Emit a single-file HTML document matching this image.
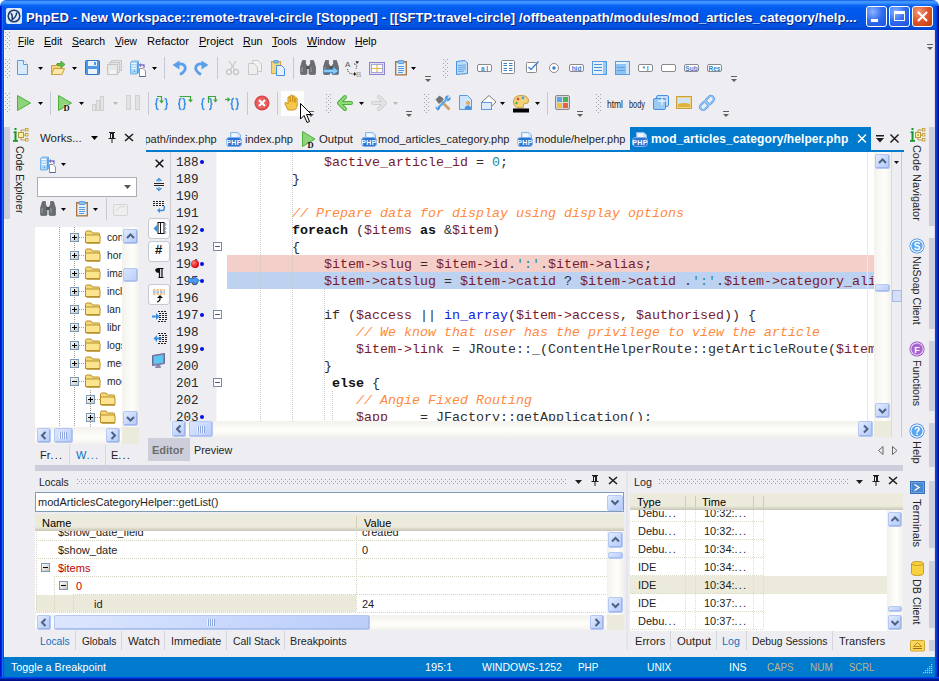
<!DOCTYPE html><html><head><meta charset="utf-8"><style>
*{margin:0;padding:0;box-sizing:border-box}
html,body{width:939px;height:681px;overflow:hidden;background:#fff}
body{position:relative;font-family:"Liberation Sans",sans-serif;font-size:11px;color:#000}
body div{position:absolute}
.t{white-space:nowrap;line-height:14px;height:14px}
.m{font-family:"Liberation Mono",monospace;font-size:13.33px;line-height:17px;white-space:pre}
svg{position:absolute;overflow:visible}
</style></head><body>
<div style="left:0px;top:0px;width:939px;height:30px;background:linear-gradient(#0A3FD8 0,#3D95FF 1px,#3D95FF 3px,#1169F5 5px,#005CEF 8px,#0058EB 15px,#0055E5 24px,#004BD8 28px,#0042CC 30px);border-radius:6px 6px 0 0"></div>
<div style="left:0px;top:6px;width:4px;height:675px;background:linear-gradient(90deg,#0010D0 0,#0010D0 1px,#0A28D8 1px,#0A28D8 2px,#186CF2 2px,#186CF2 3px,#0052E2 3px)"></div>
<div style="left:935px;top:6px;width:4px;height:675px;background:linear-gradient(90deg,#0046F0 0,#0046F0 1px,#003EE0 1px,#003EE0 2px,#0026B0 2px,#0026B0 3px,#00108A 3px)"></div>
<div style="left:0px;top:677px;width:939px;height:4px;background:linear-gradient(#0046F0 0,#0046F0 1px,#0030C8 1px,#0030C8 2px,#001890 2px,#001890 3px,#00108A 3px)"></div>
<div style="left:6px;top:8px;width:16px;height:16px;background:#DDE8F8;border-radius:2px"></div>
<svg style="left:6px;top:8px" width="16" height="16"><circle cx="8" cy="8" r="5.8" fill="none" stroke="#1A3A6A" stroke-width="1.5"/><path d="M4.5 5.5 Q6.5 5 6.2 11.5 Q10 9.5 10.8 4.5" fill="none" stroke="#1A3A6A" stroke-width="1.5"/></svg>
<div class="t" style="left:26px;top:10px;font-weight:bold;font-size:13px;color:#fff;text-shadow:1px 1px 0 #0A1E80;letter-spacing:0.09px;line-height:16px;height:16px">PhpED - New Workspace::remote-travel-circle [Stopped] - [[SFTP:travel-circle] /offbeatenpath/modules/mod_articles_category/help...</div>
<div style="left:866px;top:6px;width:21px;height:21px;border:1px solid #fff;border-radius:3px;background:radial-gradient(circle at 30% 25%,#8AB4FF,#2F6CF0 50%,#1D4FD8)"></div>
<div style="left:871px;top:19px;width:7px;height:3px;background:#fff"></div>
<div style="left:889px;top:6px;width:21px;height:21px;border:1px solid #fff;border-radius:3px;background:radial-gradient(circle at 30% 25%,#8AB4FF,#2F6CF0 50%,#1D4FD8)"></div>
<div style="left:894px;top:11px;width:11px;height:10px;border:1px solid #fff;border-top-width:3px"></div>
<div style="left:912px;top:6px;width:21px;height:21px;border:1px solid #fff;border-radius:3px;background:radial-gradient(circle at 30% 25%,#F09A7E,#E0582C 45%,#C53A10)"></div>
<svg style="left:912px;top:6px" width="21" height="21"><path d="M6 6 L15 15 M15 6 L6 15" stroke="#fff" stroke-width="2.2"/></svg>
<div style="left:4px;top:30px;width:931px;height:627px;background:#EEEEF2"></div>
<div style="left:4px;top:30px;width:1px;height:627px;background:#FBF8F5"></div>
<div style="left:4px;top:30px;width:931px;height:1px;background:#F8F6F4"></div>
<div style="left:934px;top:30px;width:1px;height:627px;background:#DCDCE2"></div>
<div style="left:4px;top:657px;width:931px;height:20px;background:#007ACC"></div>
<div class="t" style="left:11px;top:660px;color:#fff;transform-origin:0 0;transform:scaleX(0.9760)">Toggle a Breakpoint</div>
<div class="t" style="left:425px;top:660px;color:#fff;transform-origin:0 0;transform:scaleX(0.9976)">195:1</div>
<div class="t" style="left:482px;top:660px;color:#fff;transform-origin:0 0;transform:scaleX(0.9547)">WINDOWS-1252</div>
<div class="t" style="left:578px;top:660px;color:#fff;transform-origin:0 0;transform:scaleX(0.9017)">PHP</div>
<div class="t" style="left:647px;top:660px;color:#fff;transform-origin:0 0;transform:scaleX(0.9295)">UNIX</div>
<div class="t" style="left:729px;top:660px;color:#fff;transform-origin:0 0;transform:scaleX(0.9629)">INS</div>
<div class="t" style="left:767px;top:660px;color:#BDB48C;transform-origin:0 0;transform:scaleX(0.8872)">CAPS</div>
<div class="t" style="left:810px;top:660px;color:#BDB48C;transform-origin:0 0;transform:scaleX(0.9072)">NUM</div>
<div class="t" style="left:849px;top:660px;color:#BDB48C;transform-origin:0 0;transform:scaleX(0.8644)">SCRL</div>
<svg style="left:5px;top:32px" width="6" height="17"><g fill="#A0A0AC"><rect x="0" y="0" width="1" height="1"/><rect x="4" y="0" width="1" height="1"/><rect x="2" y="2" width="1" height="1"/><rect x="0" y="4" width="1" height="1"/><rect x="4" y="4" width="1" height="1"/><rect x="2" y="6" width="1" height="1"/><rect x="0" y="8" width="1" height="1"/><rect x="4" y="8" width="1" height="1"/><rect x="2" y="10" width="1" height="1"/><rect x="0" y="12" width="1" height="1"/><rect x="4" y="12" width="1" height="1"/><rect x="2" y="14" width="1" height="1"/><rect x="0" y="16" width="1" height="1"/><rect x="4" y="16" width="1" height="1"/></g></svg>
<div class="t" style="left:18px;top:34px;;transform-origin:0 0;transform:scaleX(0.9151)"><u>F</u>ile</div>
<div class="t" style="left:44px;top:34px;;transform-origin:0 0;transform:scaleX(0.9628)"><u>E</u>dit</div>
<div class="t" style="left:72px;top:34px;;transform-origin:0 0;transform:scaleX(0.9506)"><u>S</u>earch</div>
<div class="t" style="left:115px;top:34px;;transform-origin:0 0;transform:scaleX(0.9275)"><u>V</u>iew</div>
<div class="t" style="left:147px;top:34px;;transform-origin:0 0;transform:scaleX(1.0075)">Refactor</div>
<div class="t" style="left:199px;top:34px;;transform-origin:0 0;transform:scaleX(1.0015)"><u>P</u>roject</div>
<div class="t" style="left:243px;top:34px;;transform-origin:0 0;transform:scaleX(0.9642)"><u>R</u>un</div>
<div class="t" style="left:272px;top:34px;;transform-origin:0 0;transform:scaleX(0.9722)"><u>T</u>ools</div>
<div class="t" style="left:307px;top:34px;;transform-origin:0 0;transform:scaleX(0.9757)"><u>W</u>indow</div>
<div class="t" style="left:355px;top:34px;;transform-origin:0 0;transform:scaleX(0.9480)"><u>H</u>elp</div>
<svg style="left:927px;top:44px" width="7" height="7"><rect x="0" y="0" width="6" height="1" fill="#606060"/><path d="M0 3 H6 L3 6 Z" fill="#606060"/></svg>
<svg style="left:5px;top:59px" width="6" height="19"><g fill="#A0A0AC"><rect x="0" y="0" width="1" height="1"/><rect x="4" y="0" width="1" height="1"/><rect x="2" y="2" width="1" height="1"/><rect x="0" y="4" width="1" height="1"/><rect x="4" y="4" width="1" height="1"/><rect x="2" y="6" width="1" height="1"/><rect x="0" y="8" width="1" height="1"/><rect x="4" y="8" width="1" height="1"/><rect x="2" y="10" width="1" height="1"/><rect x="0" y="12" width="1" height="1"/><rect x="4" y="12" width="1" height="1"/><rect x="2" y="14" width="1" height="1"/><rect x="0" y="16" width="1" height="1"/><rect x="4" y="16" width="1" height="1"/><rect x="2" y="18" width="1" height="1"/></g></svg>
<svg style="left:15px;top:60px" width="16" height="16" viewBox="0 0 16 16"><path d="M2.5 0.5 H8.5 L12.5 4.5 V14.5 H2.5 Z" fill="#D8EAFB" stroke="#5A9BE0"/><path d="M8.5 0.5 V4.5 H12.5" fill="#fff" stroke="#5A9BE0"/></svg>
<svg style="left:38px;top:67px" width="6" height="3"><path d="M0 0 H5 L2.5 3 Z" fill="#000"/></svg>
<svg style="left:50px;top:60px" width="16" height="16" viewBox="0 0 16 16"><path d="M1.5 5.5 H6 L7 4 H11.5 V14.5 H1.5 Z" fill="#F3D27A" stroke="#C9A040"/><path d="M1.5 14.5 L4 8.5 H14.5 L12 14.5 Z" fill="#FBE7A6" stroke="#C9A040"/><path d="M7 3.5 H11 V1 L15 4.5 L11 8 V5.5 H7 Z" fill="#5DBE4A" stroke="#3C9A2E" stroke-width="0.8"/></svg>
<svg style="left:72px;top:67px" width="6" height="3"><path d="M0 0 H5 L2.5 3 Z" fill="#000"/></svg>
<svg style="left:85px;top:60px" width="16" height="16" viewBox="0 0 16 16"><rect x="0.5" y="0.5" width="14" height="14" rx="1" fill="#4D97E8" stroke="#2F73C8"/><rect x="3" y="1" width="9" height="5" fill="#EAF3FC"/><rect x="9" y="2" width="2" height="3" fill="#4D97E8"/><rect x="3" y="9" width="9" height="5" fill="#EAF3FC"/></svg>
<svg style="left:107px;top:60px" width="16" height="16" viewBox="0 0 16 16"><rect x="4.5" y="0.5" width="10" height="10" fill="#E0E0E0" stroke="#C8C8C8"/><rect x="2.5" y="2.5" width="10" height="10" fill="#E4E4E4" stroke="#C8C8C8"/><rect x="0.5" y="4.5" width="10" height="10" fill="#E8E8E8" stroke="#C4C4C4"/><rect x="2.5" y="10" width="6" height="4" fill="#F4F4F4"/></svg>
<svg style="left:130px;top:60px" width="17" height="17" viewBox="0 0 17 17"><path d="M0.5 2.5 L2 1 H8.5 V12.5 L7 14 H0.5 Z" fill="#A8D4F6" stroke="#5AA8EC" stroke-width="0.8"/><path d="M7 2.5 L8.5 1 V12.5 L7 14 Z" fill="#5AA0E0"/><path d="M1.5 3.5 H6.5 M1.5 6 H6.5 M1.5 8.5 H6.5" stroke="#fff" stroke-width="1.2"/><rect x="4" y="11" width="1" height="1" fill="#3A88D8"/><path d="M9.5 8.5 H13 L15.5 11 V16.5 H9.5 Z" fill="#fff" stroke="#888" stroke-width="0.9"/><path d="M9.5 16.5 H15.5" stroke="#4A6A98"/><path d="M14 8 V5 H10" fill="none" stroke="#7A70C8" stroke-width="1.3"/><path d="M11 3 L8.5 5 L11 7 Z" fill="#7A70C8"/></svg>
<svg style="left:152px;top:67px" width="6" height="3"><path d="M0 0 H5 L2.5 3 Z" fill="#000"/></svg>
<div style="left:164px;top:57px;width:1px;height:22px;background:#C5C7D4"></div>
<svg style="left:172px;top:60px" width="16" height="16" viewBox="0 0 16 16"><path d="M5 4.5 Q11 2.5 13 6.5 Q14.5 11 8 14.5" fill="none" stroke="#5AA0E8" stroke-width="2.8"/><path d="M0.5 5 L7.5 0.5 L7.5 9.5 Z" fill="#5AA0E8"/></svg>
<svg style="left:194px;top:60px" width="16" height="16" viewBox="0 0 16 16"><g transform="translate(15,0) scale(-1,1)"><path d="M5 4.5 Q11 2.5 13 6.5 Q14.5 11 8 14.5" fill="none" stroke="#5AA0E8" stroke-width="2.8"/><path d="M0.5 5 L7.5 0.5 L7.5 9.5 Z" fill="#5AA0E8"/></g></svg>
<div style="left:217px;top:57px;width:1px;height:22px;background:#C5C7D4"></div>
<svg style="left:225px;top:60px" width="16" height="16" viewBox="0 0 16 16"><path d="M4 1 L10 10 M11 1 L5 10" stroke="#C8C8C8" stroke-width="1.3"/><circle cx="4" cy="12" r="2.5" fill="none" stroke="#C0C0C0" stroke-width="1.2"/><circle cx="11" cy="12" r="2.5" fill="none" stroke="#C0C0C0" stroke-width="1.2"/></svg>
<svg style="left:248px;top:60px" width="16" height="16" viewBox="0 0 16 16"><path d="M4.5 0.5 H10 L13.5 4 V11.5 H4.5 Z" fill="#F2F2F2" stroke="#C8C8C8"/><path d="M0.5 3.5 H6 L9.5 7 V14.5 H0.5 Z" fill="#EEEEEE" stroke="#C8C8C8"/></svg>
<svg style="left:271px;top:60px" width="16" height="16" viewBox="0 0 16 16"><rect x="0.5" y="1.5" width="9" height="12" fill="#F2D77A" stroke="#D0A840"/><rect x="2.5" y="0.5" width="5" height="2.5" rx="1" fill="#7FB8EE" stroke="#4A90D8" stroke-width="0.8"/><path d="M5.5 5.5 H10.5 L13.5 8.5 V15.5 H5.5 Z" fill="#E4F0FC" stroke="#4A90E0"/></svg>
<div style="left:293px;top:57px;width:1px;height:22px;background:#C5C7D4"></div>
<svg style="left:300px;top:60px" width="16" height="16" viewBox="0 0 16 16"><path d="M2.5 0.5 H5.5 V3.5 L7 6 V13.5 Q7 14.5 5.5 14.5 H1.5 Q0.5 14.5 0.5 13.5 V7 Z" fill="#6A6E72" stroke="#505458" stroke-width="0.6"/><path d="M13.5 0.5 H10.5 V3.5 L9 6 V13.5 Q9 14.5 10.5 14.5 H14.5 Q15.5 14.5 15.5 13.5 V7 Z" fill="#6A6E72" stroke="#505458" stroke-width="0.6"/><rect x="6.5" y="6" width="3" height="3" fill="#505458"/><path d="M2 7 V12 M11 7 V12" stroke="#9A9EA2" stroke-width="1"/></svg>
<svg style="left:323px;top:60px" width="16" height="16" viewBox="0 0 16 16"><path d="M2.5 0.5 H5.5 V3.5 L7 6 V13.5 Q7 14.5 5.5 14.5 H1.5 Q0.5 14.5 0.5 13.5 V7 Z" fill="#6A6E72" stroke="#505458" stroke-width="0.6"/><path d="M13.5 0.5 H10.5 V3.5 L9 6 V13.5 Q9 14.5 10.5 14.5 H14.5 Q15.5 14.5 15.5 13.5 V7 Z" fill="#6A6E72" stroke="#505458" stroke-width="0.6"/><rect x="6.5" y="6" width="3" height="3" fill="#505458"/><path d="M2 7 V12 M11 7 V12" stroke="#9A9EA2" stroke-width="1"/><path d="M0.5 9.5 H10 V7 L15.5 11 L10 15 V12.5 H0.5 Z" fill="#8ACAF4" stroke="#3A88D8" stroke-width="0.7"/></svg>
<svg style="left:345px;top:60px" width="18" height="17" viewBox="0 0 18 17"><text x="0" y="7" font-size="8" font-family="Liberation Sans" fill="#555">A</text><text x="11" y="16.5" font-size="8" font-family="Liberation Sans" fill="#999">B</text><path d="M2.5 9 Q3 14.5 9.5 14" fill="none" stroke="#222" stroke-dasharray="1,1"/><path d="M9 4 Q13 4 11 9" fill="none" stroke="#222" stroke-dasharray="1,1"/><path d="M9 12 L11.5 14 L9 16 Z" fill="#222"/><path d="M10.5 1 L14 1.5 L12 4 Z" fill="#222"/></svg>
<svg style="left:369px;top:61px" width="16" height="16" viewBox="0 0 16 16"><rect x="0.5" y="1.5" width="15" height="12" fill="#E0DDF4" stroke="#8C86C8"/><rect x="2.5" y="3.5" width="11" height="8" fill="#fff" stroke="#A8A4D8"/><path d="M8 4 V11 M3 7.5 H13" stroke="#E8B848" stroke-width="1.2"/></svg>
<svg style="left:395px;top:60px" width="16" height="16" viewBox="0 0 16 16"><rect x="0.5" y="1.5" width="11" height="13.5" fill="#C89868" stroke="#A87848"/><rect x="1.5" y="3" width="9" height="11" fill="#E4F0FC"/><rect x="3" y="0.5" width="6" height="3" rx="1" fill="#8CC0F0" stroke="#4A90D8" stroke-width="0.8"/><path d="M3 6.5 H9 M3 8.5 H9 M3 10.5 H9 M3 12.5 H8" stroke="#5A9AE0"/></svg>
<svg style="left:411px;top:67px" width="6" height="3"><path d="M0 0 H5 L2.5 3 Z" fill="#000"/></svg>
<svg style="left:425px;top:76px" width="7" height="7"><rect x="0" y="0" width="6" height="1" fill="#606060"/><path d="M0 3 H6 L3 6 Z" fill="#606060"/></svg>
<svg style="left:443px;top:59px" width="6" height="19"><g fill="#A0A0AC"><rect x="0" y="0" width="1" height="1"/><rect x="4" y="0" width="1" height="1"/><rect x="2" y="2" width="1" height="1"/><rect x="0" y="4" width="1" height="1"/><rect x="4" y="4" width="1" height="1"/><rect x="2" y="6" width="1" height="1"/><rect x="0" y="8" width="1" height="1"/><rect x="4" y="8" width="1" height="1"/><rect x="2" y="10" width="1" height="1"/><rect x="0" y="12" width="1" height="1"/><rect x="4" y="12" width="1" height="1"/><rect x="2" y="14" width="1" height="1"/><rect x="0" y="16" width="1" height="1"/><rect x="4" y="16" width="1" height="1"/><rect x="2" y="18" width="1" height="1"/></g></svg>
<svg style="left:456px;top:60px" width="16" height="16" viewBox="0 0 16 16"><path d="M0.5 1.5 L9 0.5 L11.5 3 V13.5 L0.5 14.5 Z" fill="#BCDCF8" stroke="#4A90E0"/><path d="M2 5.5 L10 5 M2 7.5 L10 7 M2 9.5 L10 9 M2 11.5 L8 11.2" stroke="#5A9CE4" stroke-width="0.9"/></svg>
<svg style="left:477px;top:64px" width="16" height="9" viewBox="0 0 16 9"><rect x="0.5" y="0.5" width="14" height="7" rx="1.5" fill="#fff" stroke="#8A8A8A"/><text x="7.5" y="6.5" font-size="6.5" text-anchor="middle" font-family="Liberation Sans" font-weight="bold" fill="#3A7FD0">a I</text></svg>
<svg style="left:501px;top:60px" width="16" height="16" viewBox="0 0 16 16"><rect x="0.5" y="0.5" width="13" height="13" rx="1" fill="#fff" stroke="#8A8A8A"/><path d="M2.5 3.5 H6 M2.5 5.5 H6 M8 3.5 H11.5 M8 5.5 H11.5 M2.5 8.5 H6 M2.5 10.5 H6 M8 8.5 H11.5 M8 10.5 H11.5" stroke="#3A7FD0"/></svg>
<svg style="left:526px;top:60px" width="16" height="16" viewBox="0 0 16 16"><rect x="0.5" y="2.5" width="10" height="10" rx="1" fill="#fff" stroke="#8A8A8A"/><path d="M2.5 7 L5 9.5 L12.5 1.5" fill="none" stroke="#3A7FD0" stroke-width="1.3"/></svg>
<svg style="left:549px;top:63px" width="16" height="16" viewBox="0 0 16 16"><circle cx="5" cy="5" r="4.5" fill="#fff" stroke="#8A8A8A"/><circle cx="5" cy="5" r="1.8" fill="#3A7FD0"/></svg>
<svg style="left:569px;top:64px" width="16" height="9" viewBox="0 0 16 9"><rect x="0.5" y="0.5" width="14" height="7" rx="1.5" fill="#fff" stroke="#8A8A8A"/><text x="7.5" y="6.5" font-size="6.5" text-anchor="middle" font-family="Liberation Sans" font-weight="bold" fill="#3A7FD0">hid</text></svg>
<svg style="left:592px;top:61px" width="16" height="16" viewBox="0 0 16 16"><rect x="0.5" y="0.5" width="14" height="13" fill="#E6F1FC" stroke="#5A9BE0"/><rect x="11" y="1" width="3" height="12" fill="#9CC8F0"/><path d="M2 3.5 H10 M2 6.5 H10 M2 9.5 H10" stroke="#4A90E0"/></svg>
<svg style="left:615px;top:61px" width="16" height="16" viewBox="0 0 16 16"><rect x="0.5" y="0.5" width="14" height="13" fill="#8EC2F2" stroke="#5A9BE0"/><rect x="1" y="1" width="10" height="2" fill="#E6F1FC"/><rect x="11" y="1" width="3" height="12" fill="#CFE5FA"/><path d="M2 6.5 H10 M2 9.5 H10" stroke="#5FA0E0"/></svg>
<svg style="left:638px;top:64px" width="16" height="9" viewBox="0 0 16 9"><rect x="0.5" y="0.5" width="14" height="7" rx="1.5" fill="#fff" stroke="#8A8A8A"/><text x="7.5" y="6.5" font-size="6.5" text-anchor="middle" font-family="Liberation Sans" font-weight="bold" fill="#3A7FD0">* I</text></svg>
<svg style="left:661px;top:64px" width="16" height="9" viewBox="0 0 16 9"><rect x="0.5" y="0.5" width="14" height="7" rx="1.5" fill="#fff" stroke="#8A8A8A"/><text x="7.5" y="6.5" font-size="6.5" text-anchor="middle" font-family="Liberation Sans" font-weight="bold" fill="#3A7FD0"></text></svg>
<svg style="left:684px;top:64px" width="16" height="9" viewBox="0 0 16 9"><rect x="0.5" y="0.5" width="14" height="7" rx="1.5" fill="#fff" stroke="#8A8A8A"/><text x="7.5" y="6.5" font-size="6.5" text-anchor="middle" font-family="Liberation Sans" font-weight="bold" fill="#3A7FD0">Sub</text></svg>
<svg style="left:707px;top:64px" width="16" height="9" viewBox="0 0 16 9"><rect x="0.5" y="0.5" width="14" height="7" rx="1.5" fill="#fff" stroke="#8A8A8A"/><text x="7.5" y="6.5" font-size="6.5" text-anchor="middle" font-family="Liberation Sans" font-weight="bold" fill="#3A7FD0">Res</text></svg>
<svg style="left:731px;top:76px" width="7" height="7"><rect x="0" y="0" width="6" height="1" fill="#606060"/><path d="M0 3 H6 L3 6 Z" fill="#606060"/></svg>
<svg style="left:5px;top:93px" width="6" height="19"><g fill="#A0A0AC"><rect x="0" y="0" width="1" height="1"/><rect x="4" y="0" width="1" height="1"/><rect x="2" y="2" width="1" height="1"/><rect x="0" y="4" width="1" height="1"/><rect x="4" y="4" width="1" height="1"/><rect x="2" y="6" width="1" height="1"/><rect x="0" y="8" width="1" height="1"/><rect x="4" y="8" width="1" height="1"/><rect x="2" y="10" width="1" height="1"/><rect x="0" y="12" width="1" height="1"/><rect x="4" y="12" width="1" height="1"/><rect x="2" y="14" width="1" height="1"/><rect x="0" y="16" width="1" height="1"/><rect x="4" y="16" width="1" height="1"/><rect x="2" y="18" width="1" height="1"/></g></svg>
<svg style="left:17px;top:95px" width="16" height="16" viewBox="0 0 16 16"><path d="M0.5 0.5 L13.5 8 L0.5 15.5 Z" fill="#8ED47A" stroke="#4CAF3C"/></svg>
<svg style="left:38px;top:102px" width="6" height="3"><path d="M0 0 H5 L2.5 3 Z" fill="#000"/></svg>
<div style="left:50px;top:92px;width:1px;height:23px;background:#C5C7D4"></div>
<svg style="left:58px;top:95px" width="16" height="16" viewBox="0 0 16 16"><path d="M0.5 0.5 L13.5 8 L0.5 15.5 Z" fill="#8ED47A" stroke="#4CAF3C"/><text x="5.5" y="15.5" font-size="8.5" font-weight="bold" font-family="Liberation Serif" fill="#111" stroke="#fff" stroke-width="0.4" paint-order="stroke">D</text></svg>
<svg style="left:79px;top:102px" width="6" height="3"><path d="M0 0 H5 L2.5 3 Z" fill="#000"/></svg>
<svg style="left:92px;top:95px" width="16" height="16" viewBox="0 0 16 16"><rect x="0.5" y="9.5" width="3" height="6" fill="#E4E4E4" stroke="#D0D0D0"/><rect x="4.5" y="5.5" width="3" height="10" fill="#E4E4E4" stroke="#D0D0D0"/><rect x="8.5" y="1.5" width="3" height="14" fill="#E4E4E4" stroke="#D0D0D0"/></svg>
<svg style="left:113px;top:102px" width="6" height="3"><path d="M0 0 H5 L2.5 3 Z" fill="#B8B8B8"/></svg>
<svg style="left:126px;top:95px" width="16" height="16" viewBox="0 0 16 16"><rect x="0.5" y="0.5" width="4" height="14" fill="#E2E2E2" stroke="#D0D0D0"/><rect x="9.5" y="0.5" width="4" height="14" fill="#E2E2E2" stroke="#D0D0D0"/></svg>
<div style="left:148px;top:92px;width:1px;height:23px;background:#C5C7D4"></div>
<svg style="left:155px;top:95px" width="17" height="16" viewBox="0 0 17 16"><path d="M3.5 3.5 Q1.5 3.5 1.5 5.5 V7.5 Q1.5 9 0 9 Q1.5 9 1.5 10.5 V12.5 Q1.5 14.5 3.5 14.5" fill="none" stroke="#3A8FE8" stroke-width="1.5"/><path d="M9.5 3.5 Q11.5 3.5 11.5 5.5 V7.5 Q11.5 9 13.0 9 Q11.5 9 11.5 10.5 V12.5 Q11.5 14.5 9.5 14.5" fill="none" stroke="#3A8FE8" stroke-width="1.5"/><path d="M2 1.5 H6.5 V6" fill="none" stroke="#3CA83C" stroke-width="1.2"/><path d="M4 5.5 H9 L6.5 8.5 Z" fill="#3CA83C"/></svg>
<svg style="left:178px;top:95px" width="17" height="16" viewBox="0 0 17 16"><path d="M3.5 3.5 Q1.5 3.5 1.5 5.5 V7.5 Q1.5 9 0 9 Q1.5 9 1.5 10.5 V12.5 Q1.5 14.5 3.5 14.5" fill="none" stroke="#3A8FE8" stroke-width="1.5"/><path d="M4.5 3.5 Q6.5 3.5 6.5 5.5 V7.5 Q6.5 9 8.0 9 Q6.5 9 6.5 10.5 V12.5 Q6.5 14.5 4.5 14.5" fill="none" stroke="#3A8FE8" stroke-width="1.5"/><path d="M1.5 1.5 H12.5 V5" fill="none" stroke="#3CA83C" stroke-width="1.2"/><path d="M10 4.5 H15 L12.5 7.5 Z" fill="#3CA83C"/></svg>
<svg style="left:201px;top:95px" width="18" height="16" viewBox="0 0 18 16"><path d="M3.5 3.5 Q1.5 3.5 1.5 5.5 V7.5 Q1.5 9 0 9 Q1.5 9 1.5 10.5 V12.5 Q1.5 14.5 3.5 14.5" fill="none" stroke="#3A8FE8" stroke-width="1.5"/><path d="M8 3.5 Q10 3.5 10 5.5 V7.5 Q10 9 11.5 9 Q10 9 10 10.5 V12.5 Q10 14.5 8 14.5" fill="none" stroke="#3A8FE8" stroke-width="1.5"/><path d="M7.5 8 V1.5 H14.5 V5" fill="none" stroke="#3CA83C" stroke-width="1.2"/><path d="M12 4.5 H17 L14.5 7.5 Z" fill="#3CA83C"/></svg>
<svg style="left:225px;top:95px" width="17" height="16" viewBox="0 0 17 16"><path d="M9.0 3.5 Q7.0 3.5 7.0 5.5 V7.5 Q7.0 9 5.5 9 Q7.0 9 7.0 10.5 V12.5 Q7.0 14.5 9.0 14.5" fill="none" stroke="#3A8FE8" stroke-width="1.5"/><path d="M10.5 3.5 Q12.5 3.5 12.5 5.5 V7.5 Q12.5 9 14.0 9 Q12.5 9 12.5 10.5 V12.5 Q12.5 14.5 10.5 14.5" fill="none" stroke="#3A8FE8" stroke-width="1.5"/><path d="M0 4.5 H3" stroke="#3CA83C" stroke-width="1.2"/><path d="M2.5 2 L5.5 4.5 L2.5 7 Z" fill="#3CA83C"/></svg>
<div style="left:247px;top:92px;width:1px;height:23px;background:#C5C7D4"></div>
<svg style="left:254px;top:95px" width="16" height="16" viewBox="0 0 16 16"><circle cx="8" cy="8" r="7.5" fill="#D84848"/><circle cx="8" cy="8" r="6" fill="#E86060"/><path d="M5 5 L11 11 M11 5 L5 11" stroke="#fff" stroke-width="2.2"/></svg>
<div style="left:277px;top:92px;width:1px;height:23px;background:#C5C7D4"></div>
<div style="left:281px;top:91px;width:23px;height:25px;background:#FDFDFE"></div>
<svg style="left:284px;top:95px" width="16" height="16" viewBox="0 0 16 16"><path d="M4 15 L1 9 Q0.5 7 2.5 7.5 L4 9 V3 Q4 1.5 5.2 1.5 Q6.3 1.5 6.3 3 V7 V1.5 Q6.3 0 7.5 0 Q8.7 0 8.7 1.5 V7 V2 Q8.7 0.7 9.9 0.7 Q11 0.7 11 2 V7.5 V4 Q11 2.8 12.1 2.8 Q13.2 2.8 13.2 4 V10 Q13 15 9 15 Z" fill="#F4C64A" stroke="#C8901A" stroke-width="0.9"/></svg>
<svg style="left:308px;top:111px" width="7" height="7"><rect x="0" y="0" width="6" height="1" fill="#606060"/><path d="M0 3 H6 L3 6 Z" fill="#606060"/></svg>
<svg style="left:326px;top:94px" width="6" height="19"><g fill="#A0A0AC"><rect x="0" y="0" width="1" height="1"/><rect x="4" y="0" width="1" height="1"/><rect x="2" y="2" width="1" height="1"/><rect x="0" y="4" width="1" height="1"/><rect x="4" y="4" width="1" height="1"/><rect x="2" y="6" width="1" height="1"/><rect x="0" y="8" width="1" height="1"/><rect x="4" y="8" width="1" height="1"/><rect x="2" y="10" width="1" height="1"/><rect x="0" y="12" width="1" height="1"/><rect x="4" y="12" width="1" height="1"/><rect x="2" y="14" width="1" height="1"/><rect x="0" y="16" width="1" height="1"/><rect x="4" y="16" width="1" height="1"/><rect x="2" y="18" width="1" height="1"/></g></svg>
<svg style="left:337px;top:95px" width="16" height="16" viewBox="0 0 16 16"><path d="M8 2 L2 8 L8 14 M2.5 8 H14" fill="none" stroke="#4CAF3C" stroke-width="4" stroke-linecap="round" stroke-linejoin="round"/><path d="M8 2 L2 8 L8 14 M2.5 8 H14" fill="none" stroke="#8EDC78" stroke-width="2" stroke-linecap="round" stroke-linejoin="round"/></svg>
<svg style="left:359px;top:102px" width="6" height="3"><path d="M0 0 H5 L2.5 3 Z" fill="#000"/></svg>
<svg style="left:371px;top:95px" width="16" height="16" viewBox="0 0 16 16"><path d="M8 2 L14 8 L8 14 M13.5 8 H2" fill="none" stroke="#D0D0D0" stroke-width="4" stroke-linecap="round" stroke-linejoin="round"/><path d="M8 2 L14 8 L8 14 M13.5 8 H2" fill="none" stroke="#E4E4E4" stroke-width="2" stroke-linecap="round" stroke-linejoin="round"/></svg>
<svg style="left:393px;top:102px" width="6" height="3"><path d="M0 0 H5 L2.5 3 Z" fill="#B8B8B8"/></svg>
<svg style="left:406px;top:111px" width="7" height="7"><rect x="0" y="0" width="6" height="1" fill="#606060"/><path d="M0 3 H6 L3 6 Z" fill="#606060"/></svg>
<svg style="left:424px;top:94px" width="6" height="19"><g fill="#A0A0AC"><rect x="0" y="0" width="1" height="1"/><rect x="4" y="0" width="1" height="1"/><rect x="2" y="2" width="1" height="1"/><rect x="0" y="4" width="1" height="1"/><rect x="4" y="4" width="1" height="1"/><rect x="2" y="6" width="1" height="1"/><rect x="0" y="8" width="1" height="1"/><rect x="4" y="8" width="1" height="1"/><rect x="2" y="10" width="1" height="1"/><rect x="0" y="12" width="1" height="1"/><rect x="4" y="12" width="1" height="1"/><rect x="2" y="14" width="1" height="1"/><rect x="0" y="16" width="1" height="1"/><rect x="4" y="16" width="1" height="1"/><rect x="2" y="18" width="1" height="1"/></g></svg>
<svg style="left:435px;top:95px" width="16" height="16" viewBox="0 0 16 16"><path d="M6 6 L14.5 14.5" stroke="#C8A060" stroke-width="2.6"/><path d="M1 4.5 L4.5 1 L8.5 4 L4 8.5 Z" fill="#707478" stroke="#505458" stroke-width="0.6"/><path d="M3 13 L11.5 4.5" stroke="#5AA8F0" stroke-width="2.4"/><path d="M10 3.5 Q10.5 0.5 13.5 0.8 L12 2.5 L13.5 4 L15.2 2.5 Q15.5 5.5 12.5 6 M1 11.5 Q0.5 14.5 3.5 15 L2.5 13.2 L4.5 12 Q5 14.5 2 15" fill="#5AA8F0" stroke="#3A88D8" stroke-width="0.8"/></svg>
<svg style="left:459px;top:95px" width="16" height="16" viewBox="0 0 16 16"><path d="M0.5 0.5 H8.5 L12.5 4.5 V14.5 H0.5 Z" fill="#CFE5FA" stroke="#5A9BE0"/><circle cx="9" cy="8" r="2" fill="#E8A850"/><path d="M5.5 14.5 Q6 10.5 9 10.5 Q12 10.5 12.5 14.5 Z" fill="#4A90E0"/></svg>
<svg style="left:481px;top:95px" width="16" height="16" viewBox="0 0 16 16"><path d="M1 7 L8 0.5 L15 7 L8 13.5 Z" fill="#fff" stroke="#7A7A7A"/><rect x="0.5" y="7.5" width="10" height="7" fill="#DCEBFA" stroke="#5A9BE0"/></svg>
<svg style="left:500px;top:102px" width="6" height="3"><path d="M0 0 H5 L2.5 3 Z" fill="#000"/></svg>
<svg style="left:513px;top:95px" width="17" height="18" viewBox="0 0 17 18"><path d="M8 0.5 Q15.5 0.5 15.5 6 Q15.5 9 12 8.5 Q10 8.5 10.5 10.5 Q11 13 8 13 Q0.5 13 0.5 7 Q0.5 0.5 8 0.5 Z" fill="#F3D27A" stroke="#C9A040"/><circle cx="5" cy="4" r="1.3" fill="#E04040"/><circle cx="10" cy="3" r="1.4" fill="#5AA0E8"/><circle cx="3.5" cy="8" r="1.2" fill="#40B040"/><rect x="0" y="13.5" width="16" height="4" fill="#000"/></svg>
<svg style="left:535px;top:102px" width="6" height="3"><path d="M0 0 H5 L2.5 3 Z" fill="#000"/></svg>
<div style="left:547px;top:92px;width:1px;height:23px;background:#C5C7D4"></div>
<svg style="left:555px;top:95px" width="16" height="16" viewBox="0 0 16 16"><rect x="0.5" y="0.5" width="14" height="14" rx="1.5" fill="#D8D8D8" stroke="#888"/><rect x="2" y="2" width="5" height="5" fill="#5AA8E8"/><rect x="8" y="2" width="5" height="5" fill="#50B050"/><rect x="2" y="8" width="5" height="5" fill="#F0C040"/><rect x="8" y="8" width="5" height="5" fill="#E86040"/></svg>
<svg style="left:577px;top:111px" width="7" height="7"><rect x="0" y="0" width="6" height="1" fill="#606060"/><path d="M0 3 H6 L3 6 Z" fill="#606060"/></svg>
<svg style="left:596px;top:94px" width="6" height="19"><g fill="#A0A0AC"><rect x="0" y="0" width="1" height="1"/><rect x="4" y="0" width="1" height="1"/><rect x="2" y="2" width="1" height="1"/><rect x="0" y="4" width="1" height="1"/><rect x="4" y="4" width="1" height="1"/><rect x="2" y="6" width="1" height="1"/><rect x="0" y="8" width="1" height="1"/><rect x="4" y="8" width="1" height="1"/><rect x="2" y="10" width="1" height="1"/><rect x="0" y="12" width="1" height="1"/><rect x="4" y="12" width="1" height="1"/><rect x="2" y="14" width="1" height="1"/><rect x="0" y="16" width="1" height="1"/><rect x="4" y="16" width="1" height="1"/><rect x="2" y="18" width="1" height="1"/></g></svg>
<div class="t" style="left:607px;top:97px;transform-origin:0 0;transform:scaleX(0.7699);color:#222">html</div>
<div class="t" style="left:629px;top:97px;transform-origin:0 0;transform:scaleX(0.6702);color:#222">body</div>
<svg style="left:653px;top:95px" width="16" height="16" viewBox="0 0 16 16"><rect x="3.5" y="0.5" width="12" height="11" rx="1.5" fill="#BFDDF8" stroke="#4A90E0"/><rect x="0.5" y="3.5" width="12" height="11" rx="1.5" fill="#9ACBF4" stroke="#4A90E0"/><path d="M9 2 V10 M5 6 H14" stroke="#fff"/></svg>
<svg style="left:676px;top:96px" width="16" height="16" viewBox="0 0 16 16"><rect x="0.5" y="0.5" width="15" height="12" fill="#F3D27A" stroke="#C9A040"/><rect x="2" y="2" width="12" height="9" fill="#CDE4F8"/><path d="M2 11 V8 Q7 6 14 8 V11 Z" fill="#E0B040"/></svg>
<svg style="left:699px;top:95px" width="16" height="16" viewBox="0 0 16 16"><g transform="rotate(-45 8 8)"><rect x="-0.5" y="5" width="9" height="6" rx="3" fill="none" stroke="#5AA0E8" stroke-width="2.2"/><rect x="7.5" y="5" width="9" height="6" rx="3" fill="none" stroke="#5AA0E8" stroke-width="2.2"/><rect x="-0.5" y="5" width="9" height="6" rx="3" fill="none" stroke="#BFE0FA" stroke-width="0.7"/><rect x="7.5" y="5" width="9" height="6" rx="3" fill="none" stroke="#BFE0FA" stroke-width="0.7"/></g></svg>
<svg style="left:723px;top:111px" width="7" height="7"><rect x="0" y="0" width="6" height="1" fill="#606060"/><path d="M0 3 H6 L3 6 Z" fill="#606060"/></svg>
<svg style="left:300px;top:103px" width="12" height="21" viewBox="0 0 12 21"><path d="M0.5 0.5 V16 L4 12.5 L7 19.5 L9.5 18.5 L6.5 11.5 H11.5 Z" fill="#fff" stroke="#000"/></svg>
<div style="left:4px;top:127px;width:6px;height:92px;background:#CCCEDB"></div>
<svg style="left:13px;top:128px" width="16" height="15" viewBox="0 0 16 15"><rect x="1.5" y="0" width="2" height="2" fill="#139A2A"/><rect x="0.5" y="3.5" width="3" height="1.5" fill="#139A2A"/><rect x="1.5" y="3.5" width="2" height="9.5" fill="#139A2A"/><rect x="0" y="12" width="5" height="1.8" fill="#139A2A"/><rect x="5.5" y="4.5" width="5" height="5" fill="#FFF2A0" stroke="#B8983A"/><path d="M10.5 7 H12 M8 4.5 V2 H12 M8 9.5 V12 H12" fill="none" stroke="#B8983A"/><rect x="12.5" y="0.5" width="2.5" height="2.5" fill="#FFF2A0" stroke="#B8983A" stroke-width="0.8"/><rect x="12.5" y="5.5" width="2.5" height="2.5" fill="#FFF2A0" stroke="#B8983A" stroke-width="0.8"/><rect x="12.5" y="10.5" width="2.5" height="2.5" fill="#FFF2A0" stroke="#B8983A" stroke-width="0.8"/></svg>
<div class="t" style="left:15px;top:146px;transform-origin:0 0;transform:translate(12px,0) rotate(90deg) scaleX(0.9596);color:#222">Code Explorer</div>
<div class="t" style="left:40px;top:131px;color:#1E1E1E;transform-origin:0 0;transform:scaleX(1.0398)">Works...</div>
<svg style="left:91px;top:136px" width="8" height="4"><path d="M0 0 H7 L3.5 4 Z" fill="#000"/></svg>
<svg style="left:108px;top:132px" width="8" height="11" viewBox="0 0 8 11"><path d="M1 0.5 H7 M0.5 6.5 H7.5 M4 6.5 V11" stroke="#1E1E1E" fill="none"/><rect x="2.5" y="1.5" width="3" height="5" fill="none" stroke="#1E1E1E"/><rect x="4" y="1" width="2" height="5.5" fill="#1E1E1E"/></svg>
<svg style="left:124px;top:133px" width="10" height="9" viewBox="0 0 10 9"><path d="M1 1 L9 8 M9 1 L1 8" stroke="#1E1E1E" stroke-width="1.6"/></svg>
<svg style="left:40px;top:156px" width="17" height="17" viewBox="0 0 17 17"><path d="M0.5 2.5 L2 1 H8.5 V12.5 L7 14 H0.5 Z" fill="#A8D4F6" stroke="#5AA8EC" stroke-width="0.8"/><path d="M7 2.5 L8.5 1 V12.5 L7 14 Z" fill="#5AA0E0"/><path d="M1.5 3.5 H6.5 M1.5 6 H6.5 M1.5 8.5 H6.5" stroke="#fff" stroke-width="1.2"/><rect x="4" y="11" width="1" height="1" fill="#3A88D8"/><path d="M9.5 8.5 H13 L15.5 11 V16.5 H9.5 Z" fill="#fff" stroke="#888" stroke-width="0.9"/><path d="M9.5 16.5 H15.5" stroke="#4A6A98"/><path d="M14 8 V5 H10" fill="none" stroke="#7A70C8" stroke-width="1.3"/><path d="M11 3 L8.5 5 L11 7 Z" fill="#7A70C8"/></svg>
<svg style="left:61px;top:163px" width="6" height="3"><path d="M0 0 H5 L2.5 3 Z" fill="#000"/></svg>
<div style="left:37px;top:177px;width:100px;height:20px;background:#fff;border:1px solid #ABADB3"></div>
<svg style="left:124px;top:185px" width="8" height="4"><path d="M0 0 H7 L3.5 4 Z" fill="#555"/></svg>
<svg style="left:40px;top:201px" width="16" height="16" viewBox="0 0 16 16"><path d="M2.5 0.5 H5.5 V3.5 L7 6 V13.5 Q7 14.5 5.5 14.5 H1.5 Q0.5 14.5 0.5 13.5 V7 Z" fill="#6A6E72" stroke="#505458" stroke-width="0.6"/><path d="M13.5 0.5 H10.5 V3.5 L9 6 V13.5 Q9 14.5 10.5 14.5 H14.5 Q15.5 14.5 15.5 13.5 V7 Z" fill="#6A6E72" stroke="#505458" stroke-width="0.6"/><rect x="6.5" y="6" width="3" height="3" fill="#505458"/><path d="M2 7 V12 M11 7 V12" stroke="#9A9EA2" stroke-width="1"/></svg>
<svg style="left:61px;top:208px" width="6" height="3"><path d="M0 0 H5 L2.5 3 Z" fill="#000"/></svg>
<svg style="left:76px;top:201px" width="16" height="16" viewBox="0 0 16 16"><rect x="0.5" y="1.5" width="11" height="13.5" fill="#C89868" stroke="#A87848"/><rect x="1.5" y="3" width="9" height="11" fill="#E4F0FC"/><rect x="3" y="0.5" width="6" height="3" rx="1" fill="#8CC0F0" stroke="#4A90D8" stroke-width="0.8"/><path d="M3 6.5 H9 M3 8.5 H9 M3 10.5 H9 M3 12.5 H8" stroke="#5A9AE0"/></svg>
<svg style="left:93px;top:208px" width="6" height="3"><path d="M0 0 H5 L2.5 3 Z" fill="#000"/></svg>
<div style="left:106px;top:198px;width:1px;height:22px;background:#C5C7D4"></div>
<svg style="left:113px;top:202px" width="16" height="14" viewBox="0 0 16 14"><rect x="0.5" y="2.5" width="14" height="11" rx="1" fill="#EEE" stroke="#D4D4D4"/><path d="M3 9 Q7 3 12 5" stroke="#D8D8D8" fill="none"/></svg>
<div style="left:35px;top:227px;width:87px;height:200px;background:#fff"></div>
<svg style="left:59px;top:227px" width="1" height="200"><line x1="0.5" y1="0" x2="0.5" y2="200" stroke="#A0A0A0" stroke-dasharray="1,1"/></svg>
<svg style="left:74px;top:227px" width="1" height="200"><line x1="0.5" y1="0" x2="0.5" y2="200" stroke="#A0A0A0" stroke-dasharray="1,1"/></svg>
<svg style="left:90px;top:390px" width="1" height="37"><line x1="0.5" y1="0" x2="0.5" y2="37" stroke="#A0A0A0" stroke-dasharray="1,1"/></svg>
<svg style="left:79px;top:237px" width="6" height="1"><line x1="0" y1="0.5" x2="6" y2="0.5" stroke="#A0A0A0" stroke-dasharray="1,1"/></svg>
<svg style="left:70px;top:233px" width="9" height="9" viewBox="0 0 9 9"><defs><linearGradient id="pmg" x1="0" y1="0" x2="1" y2="1"><stop offset="0" stop-color="#fff"/><stop offset="1" stop-color="#C8C4B8"/></linearGradient></defs><rect x="0.5" y="0.5" width="8" height="8" fill="url(#pmg)" stroke="#7B98B5"/><path d="M2 4.5 H7" stroke="#000"/><path d="M4.5 2 V7" stroke="#000"/></svg>
<svg style="left:85px;top:230px" width="16" height="14" viewBox="0 0 16 14"><path d="M0.5 2.5 Q0.5 1 2 1 H6 L7.5 3 H13.5 Q14.5 3 14.5 4 V12.5 H0.5 Z" fill="#F5D978" stroke="#B8902A"/><path d="M0.5 12.5 V6 Q0.5 5 1.5 5 H14 Q15 5 15 6 V12.5 Z" fill="#FCE48E" stroke="#B8902A"/><path d="M1.5 13.5 H15" stroke="#C8A85A" stroke-width="1"/></svg>
<div class="t" style="left:107px;top:230px;color:#1E1E1E;transform-origin:0 0;transform:scaleX(0.93)">con</div>
<svg style="left:79px;top:255px" width="6" height="1"><line x1="0" y1="0.5" x2="6" y2="0.5" stroke="#A0A0A0" stroke-dasharray="1,1"/></svg>
<svg style="left:70px;top:251px" width="9" height="9" viewBox="0 0 9 9"><defs><linearGradient id="pmg" x1="0" y1="0" x2="1" y2="1"><stop offset="0" stop-color="#fff"/><stop offset="1" stop-color="#C8C4B8"/></linearGradient></defs><rect x="0.5" y="0.5" width="8" height="8" fill="url(#pmg)" stroke="#7B98B5"/><path d="M2 4.5 H7" stroke="#000"/><path d="M4.5 2 V7" stroke="#000"/></svg>
<svg style="left:85px;top:248px" width="16" height="14" viewBox="0 0 16 14"><path d="M0.5 2.5 Q0.5 1 2 1 H6 L7.5 3 H13.5 Q14.5 3 14.5 4 V12.5 H0.5 Z" fill="#F5D978" stroke="#B8902A"/><path d="M0.5 12.5 V6 Q0.5 5 1.5 5 H14 Q15 5 15 6 V12.5 Z" fill="#FCE48E" stroke="#B8902A"/><path d="M1.5 13.5 H15" stroke="#C8A85A" stroke-width="1"/></svg>
<div class="t" style="left:107px;top:248px;color:#1E1E1E;transform-origin:0 0;transform:scaleX(0.93)">hor</div>
<svg style="left:79px;top:273px" width="6" height="1"><line x1="0" y1="0.5" x2="6" y2="0.5" stroke="#A0A0A0" stroke-dasharray="1,1"/></svg>
<svg style="left:70px;top:269px" width="9" height="9" viewBox="0 0 9 9"><defs><linearGradient id="pmg" x1="0" y1="0" x2="1" y2="1"><stop offset="0" stop-color="#fff"/><stop offset="1" stop-color="#C8C4B8"/></linearGradient></defs><rect x="0.5" y="0.5" width="8" height="8" fill="url(#pmg)" stroke="#7B98B5"/><path d="M2 4.5 H7" stroke="#000"/><path d="M4.5 2 V7" stroke="#000"/></svg>
<svg style="left:85px;top:266px" width="16" height="14" viewBox="0 0 16 14"><path d="M0.5 2.5 Q0.5 1 2 1 H6 L7.5 3 H13.5 Q14.5 3 14.5 4 V12.5 H0.5 Z" fill="#F5D978" stroke="#B8902A"/><path d="M0.5 12.5 V6 Q0.5 5 1.5 5 H14 Q15 5 15 6 V12.5 Z" fill="#FCE48E" stroke="#B8902A"/><path d="M1.5 13.5 H15" stroke="#C8A85A" stroke-width="1"/></svg>
<div class="t" style="left:107px;top:266px;color:#1E1E1E;transform-origin:0 0;transform:scaleX(0.93)">ima</div>
<svg style="left:79px;top:291px" width="6" height="1"><line x1="0" y1="0.5" x2="6" y2="0.5" stroke="#A0A0A0" stroke-dasharray="1,1"/></svg>
<svg style="left:70px;top:287px" width="9" height="9" viewBox="0 0 9 9"><defs><linearGradient id="pmg" x1="0" y1="0" x2="1" y2="1"><stop offset="0" stop-color="#fff"/><stop offset="1" stop-color="#C8C4B8"/></linearGradient></defs><rect x="0.5" y="0.5" width="8" height="8" fill="url(#pmg)" stroke="#7B98B5"/><path d="M2 4.5 H7" stroke="#000"/><path d="M4.5 2 V7" stroke="#000"/></svg>
<svg style="left:85px;top:284px" width="16" height="14" viewBox="0 0 16 14"><path d="M0.5 2.5 Q0.5 1 2 1 H6 L7.5 3 H13.5 Q14.5 3 14.5 4 V12.5 H0.5 Z" fill="#F5D978" stroke="#B8902A"/><path d="M0.5 12.5 V6 Q0.5 5 1.5 5 H14 Q15 5 15 6 V12.5 Z" fill="#FCE48E" stroke="#B8902A"/><path d="M1.5 13.5 H15" stroke="#C8A85A" stroke-width="1"/></svg>
<div class="t" style="left:107px;top:284px;color:#1E1E1E;transform-origin:0 0;transform:scaleX(0.93)">incl</div>
<svg style="left:79px;top:309px" width="6" height="1"><line x1="0" y1="0.5" x2="6" y2="0.5" stroke="#A0A0A0" stroke-dasharray="1,1"/></svg>
<svg style="left:70px;top:305px" width="9" height="9" viewBox="0 0 9 9"><defs><linearGradient id="pmg" x1="0" y1="0" x2="1" y2="1"><stop offset="0" stop-color="#fff"/><stop offset="1" stop-color="#C8C4B8"/></linearGradient></defs><rect x="0.5" y="0.5" width="8" height="8" fill="url(#pmg)" stroke="#7B98B5"/><path d="M2 4.5 H7" stroke="#000"/><path d="M4.5 2 V7" stroke="#000"/></svg>
<svg style="left:85px;top:302px" width="16" height="14" viewBox="0 0 16 14"><path d="M0.5 2.5 Q0.5 1 2 1 H6 L7.5 3 H13.5 Q14.5 3 14.5 4 V12.5 H0.5 Z" fill="#F5D978" stroke="#B8902A"/><path d="M0.5 12.5 V6 Q0.5 5 1.5 5 H14 Q15 5 15 6 V12.5 Z" fill="#FCE48E" stroke="#B8902A"/><path d="M1.5 13.5 H15" stroke="#C8A85A" stroke-width="1"/></svg>
<div class="t" style="left:107px;top:302px;color:#1E1E1E;transform-origin:0 0;transform:scaleX(0.93)">lan</div>
<svg style="left:79px;top:327px" width="6" height="1"><line x1="0" y1="0.5" x2="6" y2="0.5" stroke="#A0A0A0" stroke-dasharray="1,1"/></svg>
<svg style="left:70px;top:323px" width="9" height="9" viewBox="0 0 9 9"><defs><linearGradient id="pmg" x1="0" y1="0" x2="1" y2="1"><stop offset="0" stop-color="#fff"/><stop offset="1" stop-color="#C8C4B8"/></linearGradient></defs><rect x="0.5" y="0.5" width="8" height="8" fill="url(#pmg)" stroke="#7B98B5"/><path d="M2 4.5 H7" stroke="#000"/><path d="M4.5 2 V7" stroke="#000"/></svg>
<svg style="left:85px;top:320px" width="16" height="14" viewBox="0 0 16 14"><path d="M0.5 2.5 Q0.5 1 2 1 H6 L7.5 3 H13.5 Q14.5 3 14.5 4 V12.5 H0.5 Z" fill="#F5D978" stroke="#B8902A"/><path d="M0.5 12.5 V6 Q0.5 5 1.5 5 H14 Q15 5 15 6 V12.5 Z" fill="#FCE48E" stroke="#B8902A"/><path d="M1.5 13.5 H15" stroke="#C8A85A" stroke-width="1"/></svg>
<div class="t" style="left:107px;top:320px;color:#1E1E1E;transform-origin:0 0;transform:scaleX(0.93)">libr</div>
<svg style="left:79px;top:345px" width="6" height="1"><line x1="0" y1="0.5" x2="6" y2="0.5" stroke="#A0A0A0" stroke-dasharray="1,1"/></svg>
<svg style="left:70px;top:341px" width="9" height="9" viewBox="0 0 9 9"><defs><linearGradient id="pmg" x1="0" y1="0" x2="1" y2="1"><stop offset="0" stop-color="#fff"/><stop offset="1" stop-color="#C8C4B8"/></linearGradient></defs><rect x="0.5" y="0.5" width="8" height="8" fill="url(#pmg)" stroke="#7B98B5"/><path d="M2 4.5 H7" stroke="#000"/><path d="M4.5 2 V7" stroke="#000"/></svg>
<svg style="left:85px;top:338px" width="16" height="14" viewBox="0 0 16 14"><path d="M0.5 2.5 Q0.5 1 2 1 H6 L7.5 3 H13.5 Q14.5 3 14.5 4 V12.5 H0.5 Z" fill="#F5D978" stroke="#B8902A"/><path d="M0.5 12.5 V6 Q0.5 5 1.5 5 H14 Q15 5 15 6 V12.5 Z" fill="#FCE48E" stroke="#B8902A"/><path d="M1.5 13.5 H15" stroke="#C8A85A" stroke-width="1"/></svg>
<div class="t" style="left:107px;top:338px;color:#1E1E1E;transform-origin:0 0;transform:scaleX(0.93)">logs</div>
<svg style="left:79px;top:363px" width="6" height="1"><line x1="0" y1="0.5" x2="6" y2="0.5" stroke="#A0A0A0" stroke-dasharray="1,1"/></svg>
<svg style="left:70px;top:359px" width="9" height="9" viewBox="0 0 9 9"><defs><linearGradient id="pmg" x1="0" y1="0" x2="1" y2="1"><stop offset="0" stop-color="#fff"/><stop offset="1" stop-color="#C8C4B8"/></linearGradient></defs><rect x="0.5" y="0.5" width="8" height="8" fill="url(#pmg)" stroke="#7B98B5"/><path d="M2 4.5 H7" stroke="#000"/><path d="M4.5 2 V7" stroke="#000"/></svg>
<svg style="left:85px;top:356px" width="16" height="14" viewBox="0 0 16 14"><path d="M0.5 2.5 Q0.5 1 2 1 H6 L7.5 3 H13.5 Q14.5 3 14.5 4 V12.5 H0.5 Z" fill="#F5D978" stroke="#B8902A"/><path d="M0.5 12.5 V6 Q0.5 5 1.5 5 H14 Q15 5 15 6 V12.5 Z" fill="#FCE48E" stroke="#B8902A"/><path d="M1.5 13.5 H15" stroke="#C8A85A" stroke-width="1"/></svg>
<div class="t" style="left:107px;top:356px;color:#1E1E1E;transform-origin:0 0;transform:scaleX(0.93)">mec</div>
<svg style="left:79px;top:381px" width="6" height="1"><line x1="0" y1="0.5" x2="6" y2="0.5" stroke="#A0A0A0" stroke-dasharray="1,1"/></svg>
<svg style="left:70px;top:377px" width="9" height="9" viewBox="0 0 9 9"><defs><linearGradient id="pmg" x1="0" y1="0" x2="1" y2="1"><stop offset="0" stop-color="#fff"/><stop offset="1" stop-color="#C8C4B8"/></linearGradient></defs><rect x="0.5" y="0.5" width="8" height="8" fill="url(#pmg)" stroke="#7B98B5"/><path d="M2 4.5 H7" stroke="#000"/></svg>
<svg style="left:85px;top:374px" width="16" height="14" viewBox="0 0 16 14"><path d="M0.5 2.5 Q0.5 1 2 1 H6 L7.5 3 H13.5 Q14.5 3 14.5 4 V12.5 H0.5 Z" fill="#F5D978" stroke="#B8902A"/><path d="M0.5 12.5 V6 Q0.5 5 1.5 5 H14 Q15 5 15 6 V12.5 Z" fill="#FCE48E" stroke="#B8902A"/><path d="M1.5 13.5 H15" stroke="#C8A85A" stroke-width="1"/></svg>
<div class="t" style="left:107px;top:374px;color:#1E1E1E;transform-origin:0 0;transform:scaleX(0.93)">mod</div>
<svg style="left:95px;top:399px" width="6" height="1"><line x1="0" y1="0.5" x2="6" y2="0.5" stroke="#A0A0A0" stroke-dasharray="1,1"/></svg>
<svg style="left:86px;top:395px" width="9" height="9" viewBox="0 0 9 9"><defs><linearGradient id="pmg" x1="0" y1="0" x2="1" y2="1"><stop offset="0" stop-color="#fff"/><stop offset="1" stop-color="#C8C4B8"/></linearGradient></defs><rect x="0.5" y="0.5" width="8" height="8" fill="url(#pmg)" stroke="#7B98B5"/><path d="M2 4.5 H7" stroke="#000"/><path d="M4.5 2 V7" stroke="#000"/></svg>
<svg style="left:100px;top:392px" width="16" height="14" viewBox="0 0 16 14"><path d="M0.5 2.5 Q0.5 1 2 1 H6 L7.5 3 H13.5 Q14.5 3 14.5 4 V12.5 H0.5 Z" fill="#F5D978" stroke="#B8902A"/><path d="M0.5 12.5 V6 Q0.5 5 1.5 5 H14 Q15 5 15 6 V12.5 Z" fill="#FCE48E" stroke="#B8902A"/><path d="M1.5 13.5 H15" stroke="#C8A85A" stroke-width="1"/></svg>
<svg style="left:95px;top:417px" width="6" height="1"><line x1="0" y1="0.5" x2="6" y2="0.5" stroke="#A0A0A0" stroke-dasharray="1,1"/></svg>
<svg style="left:86px;top:413px" width="9" height="9" viewBox="0 0 9 9"><defs><linearGradient id="pmg" x1="0" y1="0" x2="1" y2="1"><stop offset="0" stop-color="#fff"/><stop offset="1" stop-color="#C8C4B8"/></linearGradient></defs><rect x="0.5" y="0.5" width="8" height="8" fill="url(#pmg)" stroke="#7B98B5"/><path d="M2 4.5 H7" stroke="#000"/><path d="M4.5 2 V7" stroke="#000"/></svg>
<svg style="left:100px;top:410px" width="16" height="14" viewBox="0 0 16 14"><path d="M0.5 2.5 Q0.5 1 2 1 H6 L7.5 3 H13.5 Q14.5 3 14.5 4 V12.5 H0.5 Z" fill="#F5D978" stroke="#B8902A"/><path d="M0.5 12.5 V6 Q0.5 5 1.5 5 H14 Q15 5 15 6 V12.5 Z" fill="#FCE48E" stroke="#B8902A"/><path d="M1.5 13.5 H15" stroke="#C8A85A" stroke-width="1"/></svg>
<div style="left:122px;top:227px;width:17px;height:200px;background:linear-gradient(90deg,#F3F1EC,#FEFEFB 60%,#F3F1EC)"></div>
<div style="left:123px;top:229px;width:15px;height:15px;background:linear-gradient(135deg,#E3ECFD,#C3D5FC 60%,#B7CBF8);border:1px solid #B3C8F5;border-radius:2px;box-shadow:inset -1px -1px 0 #9FB5E8"></div>
<svg style="left:0;top:0" width="939" height="681"><path d="M127.0 238.0 L130.5 234.5 L134.0 238.0" fill="none" stroke="#4D6185" stroke-width="2"/></svg>
<div style="left:123px;top:268px;width:15px;height:14px;background:linear-gradient(135deg,#DCE6FD,#C6D6FC 60%,#BACDF8);border:1px solid #B3C8F5;border-radius:2px;box-shadow:inset -1px -1px 0 #A8BDEA"></div>
<div style="left:123px;top:411px;width:15px;height:15px;background:linear-gradient(135deg,#E3ECFD,#C3D5FC 60%,#B7CBF8);border:1px solid #B3C8F5;border-radius:2px;box-shadow:inset -1px -1px 0 #9FB5E8"></div>
<svg style="left:0;top:0" width="939" height="681"><path d="M127.0 417.0 L130.5 420.5 L134.0 417.0" fill="none" stroke="#4D6185" stroke-width="2"/></svg>
<div style="left:35px;top:427px;width:87px;height:17px;background:linear-gradient(#F3F1EC,#FEFEFB 60%,#F3F1EC)"></div>
<div style="left:37px;top:428px;width:14px;height:15px;background:linear-gradient(135deg,#E3ECFD,#C3D5FC 60%,#B7CBF8);border:1px solid #B3C8F5;border-radius:2px;box-shadow:inset -1px -1px 0 #9FB5E8"></div>
<svg style="left:0;top:0" width="939" height="681"><path d="M45.5 432.0 L42.0 435.5 L45.5 439.0" fill="none" stroke="#4D6185" stroke-width="2"/></svg>
<div style="left:54px;top:428px;width:19px;height:15px;background:linear-gradient(135deg,#DCE6FD,#C6D6FC 60%,#BACDF8);border:1px solid #B3C8F5;border-radius:2px;box-shadow:inset -1px -1px 0 #A8BDEA"></div>
<svg style="left:59px;top:432px" width="9" height="7"><path d="M0.5 0 V7 M2.5 0 V7 M4.5 0 V7 M6.5 0 V7" stroke="#EEF3FE"/><path d="M1.5 0 V7 M3.5 0 V7 M5.5 0 V7 M7.5 0 V7" stroke="#8CA7E0"/></svg>
<div style="left:106px;top:428px;width:14px;height:15px;background:linear-gradient(135deg,#E3ECFD,#C3D5FC 60%,#B7CBF8);border:1px solid #B3C8F5;border-radius:2px;box-shadow:inset -1px -1px 0 #9FB5E8"></div>
<svg style="left:0;top:0" width="939" height="681"><path d="M111.5 432.0 L115.0 435.5 L111.5 439.0" fill="none" stroke="#4D6185" stroke-width="2"/></svg>
<div style="left:122px;top:427px;width:17px;height:17px;background:#EBEADB"></div>
<div class="t" style="left:40px;top:448px;color:#1E1E1E">Fr<span style="letter-spacing:1.2px">...</span></div>
<div style="left:69px;top:444px;width:1px;height:21px;background:#D8D8E0"></div>
<div class="t" style="left:76px;top:448px;color:#0E70C0">W<span style="letter-spacing:1.2px">...</span></div>
<div style="left:105px;top:444px;width:1px;height:21px;background:#D8D8E0"></div>
<div class="t" style="left:111px;top:448px;color:#1E1E1E">E<span style="letter-spacing:1.2px">...</span></div>
<div class="t" style="left:144.5px;top:132px;color:#1E1E1E">path/index.php</div>
<div style="left:142px;top:128px;width:4px;height:20px;background:#EEEEF2"></div>
<svg style="left:226px;top:132px" width="16" height="16" viewBox="0 0 16 16"><path d="M4.5 0.5 H12 L14.5 3 V7 H4.5 Z" fill="#D4E6FA" stroke="#8AB8EC"/><rect x="6" y="1.5" width="5" height="4" fill="#F4F9FF"/><rect x="0.5" y="5.5" width="15" height="9" rx="3" fill="#2F74D0" stroke="#7AB0F0"/><text x="8" y="12.8" font-size="7" font-weight="bold" text-anchor="middle" font-family="Liberation Sans" fill="#fff" letter-spacing="0.3">PHP</text></svg>
<div class="t" style="left:245px;top:132px;color:#1E1E1E;transform-origin:0 0;transform:scaleX(1.0053)">index.php</div>
<svg style="left:302px;top:131px" width="15" height="17" viewBox="0 0 15 17"><path d="M0.5 0.5 L13 8 L0.5 15.5 Z" fill="#8ED47A" stroke="#4CAF3C"/><text x="5.5" y="16.5" font-size="8.5" font-weight="bold" font-family="Liberation Serif" fill="#111">D</text></svg>
<div class="t" style="left:319px;top:132px;color:#1E1E1E;transform-origin:0 0;transform:scaleX(1.0292)">Output</div>
<svg style="left:361px;top:132px" width="16" height="16" viewBox="0 0 16 16"><path d="M4.5 0.5 H12 L14.5 3 V7 H4.5 Z" fill="#D4E6FA" stroke="#8AB8EC"/><rect x="6" y="1.5" width="5" height="4" fill="#F4F9FF"/><rect x="0.5" y="5.5" width="15" height="9" rx="3" fill="#2F74D0" stroke="#7AB0F0"/><text x="8" y="12.8" font-size="7" font-weight="bold" text-anchor="middle" font-family="Liberation Sans" fill="#fff" letter-spacing="0.3">PHP</text></svg>
<div class="t" style="left:378px;top:132px;color:#1E1E1E;transform-origin:0 0;transform:scaleX(1.0012)">mod_articles_category.php</div>
<svg style="left:517px;top:132px" width="16" height="16" viewBox="0 0 16 16"><path d="M4.5 0.5 H12 L14.5 3 V7 H4.5 Z" fill="#D4E6FA" stroke="#8AB8EC"/><rect x="6" y="1.5" width="5" height="4" fill="#F4F9FF"/><rect x="0.5" y="5.5" width="15" height="9" rx="3" fill="#2F74D0" stroke="#7AB0F0"/><text x="8" y="12.8" font-size="7" font-weight="bold" text-anchor="middle" font-family="Liberation Sans" fill="#fff" letter-spacing="0.3">PHP</text></svg>
<div class="t" style="left:535px;top:132px;color:#1E1E1E;transform-origin:0 0;transform:scaleX(0.9991)">module/helper.php</div>
<div style="left:630px;top:127px;width:241px;height:23px;background:#007ACC"></div>
<svg style="left:632px;top:132px" width="16" height="16" viewBox="0 0 16 16"><path d="M4.5 0.5 H12 L14.5 3 V7 H4.5 Z" fill="#D4E6FA" stroke="#8AB8EC"/><rect x="6" y="1.5" width="5" height="4" fill="#F4F9FF"/><rect x="0.5" y="5.5" width="15" height="9" rx="3" fill="#2F74D0" stroke="#7AB0F0"/><text x="8" y="12.8" font-size="7" font-weight="bold" text-anchor="middle" font-family="Liberation Sans" fill="#fff" letter-spacing="0.3">PHP</text></svg>
<div class="t" style="left:651px;top:132px;color:#fff;font-weight:bold;font-size:12px;letter-spacing:0.08px;line-height:15px;height:15px">mod_articles_category/helper.php</div>
<svg style="left:857px;top:134px" width="10" height="9" viewBox="0 0 10 9"><path d="M1 0.5 L9 8.5 M9 0.5 L1 8.5" stroke="#fff" stroke-width="1.5"/></svg>
<svg style="left:876px;top:135px" width="9" height="8" viewBox="0 0 9 8"><rect x="0" y="0" width="8" height="1.5" fill="#1E1E1E"/><path d="M0 3 H8 L4 7.5 Z" fill="#1E1E1E"/></svg>
<svg style="left:890px;top:134px" width="9" height="9" viewBox="0 0 9 9"><path d="M0.5 0.5 L8.5 8.5 M8.5 0.5 L0.5 8.5" stroke="#1E1E1E" stroke-width="1.5"/></svg>
<div style="left:146px;top:150px;width:758px;height:2px;background:#007ACC"></div>
<div style="left:170px;top:152px;width:1px;height:269px;background:#CBCDD6"></div>
<div style="left:148px;top:218px;width:22px;height:21px;background:#FCFCFC;border:1px solid #C6C8D4;border-radius:3px"></div>
<div style="left:148px;top:241px;width:22px;height:21px;background:#FCFCFC;border:1px solid #C6C8D4;border-radius:3px"></div>
<div style="left:148px;top:284px;width:22px;height:21px;background:#FCFCFC;border:1px solid #C6C8D4;border-radius:3px"></div>
<svg style="left:155px;top:159px" width="9" height="9" viewBox="0 0 9 9"><path d="M0.7 0.7 L8.3 8.3 M8.3 0.7 L0.7 8.3" stroke="#111" stroke-width="1.5"/></svg>
<svg style="left:153px;top:178px" width="12" height="13" viewBox="0 0 12 13"><path d="M1 5.5 H11 M1 7.5 H11" stroke="#222"/><path d="M6 1 V4 M6 9 V12" stroke="#3A8FE0"/><path d="M3.5 3 L6 0.5 L8.5 3 M3.5 10 L6 12.5 L8.5 10" fill="none" stroke="#3A8FE0" stroke-width="1.2"/></svg>
<svg style="left:152px;top:200px" width="14" height="13" viewBox="0 0 14 13"><rect x="1" y="1" width="2" height="1" fill="#222"/><rect x="4" y="1" width="2" height="1" fill="#222"/><rect x="7" y="1" width="2" height="1" fill="#222"/><rect x="10" y="1" width="2" height="1" fill="#222"/><rect x="1" y="3" width="2" height="1" fill="#222"/><rect x="4" y="3" width="2" height="1" fill="#222"/><rect x="7" y="3" width="2" height="1" fill="#222"/><rect x="10" y="3" width="2" height="1" fill="#222"/><rect x="1" y="5" width="2" height="1" fill="#222"/><rect x="4" y="5" width="2" height="1" fill="#222"/><rect x="7" y="5" width="2" height="1" fill="#222"/><rect x="10" y="5" width="2" height="1" fill="#222"/><path d="M12.25 6 V9 Q12.25 10.5 10.5 10.5 H7" fill="none" stroke="#3A8FE0" stroke-width="1.5"/><path d="M8 8 L5 10.5 L8 13 Z" fill="#3A8FE0"/></svg>
<svg style="left:153px;top:222px" width="14" height="13" viewBox="0 0 14 13"><path d="M0.5 6.5 L4 3 V10 Z" fill="#3A8FE0"/><rect x="5" y="0.5" width="6" height="11" fill="#fff" stroke="#111"/><path d="M7.5 1 V11" stroke="#111"/><path d="M12 1 L13 2.5 L12 4 M12 5 L13 6.5 L12 8 M12 9 L13 10.5 L12 12" fill="none" stroke="#3A8FE0" stroke-width="0.8"/></svg>
<div class="t" style="left:155px;top:242px;font-size:13px;font-weight:bold;color:#111;line-height:15px">#</div>
<svg style="left:155px;top:268px" width="9" height="10" viewBox="0 0 9 10"><path d="M0.5 2.5 Q0.5 0.5 3 0.5 H8.5" fill="none" stroke="#111"/><path d="M4 0.5 Q0 0.5 0.5 3 Q1 5 4 5 Z" fill="#111"/><path d="M4.5 0.5 V9.5 M7 0.5 V9.5" stroke="#111" stroke-width="1.2"/><path d="M3.5 9.5 H8.5" stroke="#111"/></svg>
<svg style="left:153px;top:289px" width="13" height="14" viewBox="0 0 13 14"><path d="M0 1 H12" stroke="#F08A20" stroke-dasharray="2.5,1"/><path d="M0 3 H12" stroke="#3A8FE0" stroke-dasharray="2.5,1"/><path d="M0 5 H12" stroke="#F08A20" stroke-dasharray="2.5,1"/><path d="M7 7 V10 Q7 12 4 13" fill="none" stroke="#111" stroke-width="1.2"/><path d="M4 9 L7 6 L10 9 Z" fill="#111"/></svg>
<svg style="left:152px;top:310px" width="14" height="13" viewBox="0 0 14 13"><rect x="6" y="1" width="2" height="1" fill="#222"/><rect x="9" y="1" width="2" height="1" fill="#222"/><rect x="12" y="1" width="2" height="1" fill="#222"/><rect x="6" y="11" width="2" height="1" fill="#222"/><rect x="9" y="11" width="2" height="1" fill="#222"/><rect x="12" y="11" width="2" height="1" fill="#222"/><rect x="7" y="3" width="2" height="1" fill="#222"/><rect x="10" y="3" width="2" height="1" fill="#222"/><rect x="13" y="3" width="2" height="1" fill="#222"/><rect x="7" y="5" width="2" height="1" fill="#222"/><rect x="10" y="5" width="2" height="1" fill="#222"/><rect x="13" y="5" width="2" height="1" fill="#222"/><rect x="7" y="7" width="2" height="1" fill="#222"/><rect x="10" y="7" width="2" height="1" fill="#222"/><rect x="13" y="7" width="2" height="1" fill="#222"/><rect x="7" y="9" width="2" height="1" fill="#222"/><rect x="10" y="9" width="2" height="1" fill="#222"/><rect x="13" y="9" width="2" height="1" fill="#222"/><rect x="0" y="5.5" width="5" height="2" fill="#3A8FE0"/><path d="M4 3 L7.5 6.5 L4 10 Z" fill="#3A8FE0"/></svg>
<svg style="left:153px;top:332px" width="14" height="13" viewBox="0 0 14 13"><rect x="5" y="1" width="2" height="1" fill="#222"/><rect x="8" y="1" width="2" height="1" fill="#222"/><rect x="11" y="1" width="2" height="1" fill="#222"/><rect x="5" y="11" width="2" height="1" fill="#222"/><rect x="8" y="11" width="2" height="1" fill="#222"/><rect x="11" y="11" width="2" height="1" fill="#222"/><rect x="6" y="3" width="2" height="1" fill="#222"/><rect x="9" y="3" width="2" height="1" fill="#222"/><rect x="12" y="3" width="2" height="1" fill="#222"/><rect x="6" y="5" width="2" height="1" fill="#222"/><rect x="9" y="5" width="2" height="1" fill="#222"/><rect x="12" y="5" width="2" height="1" fill="#222"/><rect x="6" y="7" width="2" height="1" fill="#222"/><rect x="9" y="7" width="2" height="1" fill="#222"/><rect x="12" y="7" width="2" height="1" fill="#222"/><rect x="6" y="9" width="2" height="1" fill="#222"/><rect x="9" y="9" width="2" height="1" fill="#222"/><rect x="12" y="9" width="2" height="1" fill="#222"/><rect x="3.5" y="5.5" width="5" height="2" fill="#3A8FE0"/><path d="M4 3 L0.5 6.5 L4 10 Z" fill="#3A8FE0"/></svg>
<svg style="left:152px;top:353px" width="13" height="16" viewBox="0 0 13 16"><path d="M0.5 2.5 L12.5 0.5 V10.5 L0.5 12.5 Z" fill="#8A8AB8" stroke="#6A6A98"/><path d="M2 3.5 L11 2 V9.5 L2 11 Z" fill="#5CC8F0"/><path d="M4 12.5 L3 15 H9 L8 11" fill="#8A8AB0"/></svg>
<div style="left:171px;top:152px;width:46px;height:269px;background:#EEEEF2"></div>
<div style="left:217px;top:152px;width:657px;height:269px;background:#fff"></div>
<div style="left:216px;top:152px;width:1px;height:269px;background:#F8F8FA"></div>
<div style="left:227px;top:255px;width:647px;height:17px;background:#F4CFCA"></div>
<div style="left:227px;top:272px;width:647px;height:17px;background:#BDD1F1"></div>
<svg style="left:260px;top:152px" width="1" height="269"><line x1="0.5" y1="0" x2="0.5" y2="269" stroke="#C8C8C8" stroke-dasharray="1,1"/></svg>
<svg style="left:292px;top:152px" width="1" height="269"><line x1="0.5" y1="0" x2="0.5" y2="269" stroke="#C8C8C8" stroke-dasharray="1,1"/></svg>
<svg style="left:324px;top:289px" width="1" height="132"><line x1="0.5" y1="0" x2="0.5" y2="132" stroke="#C8C8C8" stroke-dasharray="1,1"/></svg>
<svg style="left:332px;top:391px" width="1" height="30"><line x1="0.5" y1="0" x2="0.5" y2="30" stroke="#C8C8C8" stroke-dasharray="1,1"/></svg>
<div style="left:867px;top:152px;width:1px;height:269px;background:#EDE9D6"></div>
<div class="m" style="left:228px;top:154px;width:646px;height:268px;overflow:hidden">            <span style="color:#7A1A28">$active_article_id</span><span style="color:#303030"> = </span><span style="color:#1A8A9A">0</span><span style="color:#303030">;</span>
        <span style="color:#2A2A3A">}</span>

        <i style="color:#FF8A3D">// Prepare data for display using display options</i>
        <b style="color:#111">foreach</b><span style="color:#303030"> </span><span style="color:#2A2A3A">(</span><span style="color:#7A1A28">$items</span><span style="color:#303030"> </span><b style="color:#111">as</b><span style="color:#303030"> &amp;</span><span style="color:#7A1A28">$item</span><span style="color:#2A2A3A">)</span>
        <span style="color:#2A2A3A">{</span>
            <span style="color:#7A1A28">$item-&gt;slug</span><span style="color:#303030"> = </span><span style="color:#7A1A28">$item-&gt;id</span><span style="color:#303030">.</span><span style="color:#2E8A8A">':'</span><span style="color:#303030">.</span><span style="color:#7A1A28">$item-&gt;alias</span><span style="color:#303030">;</span>
            <span style="color:#7A1A28">$item-&gt;catslug</span><span style="color:#303030"> = </span><span style="color:#7A1A28">$item-&gt;catid</span><span style="color:#303030"> ? </span><span style="color:#7A1A28">$item-&gt;catid</span><span style="color:#303030"> .</span><span style="color:#2E8A8A">':'</span><span style="color:#303030">.</span><span style="color:#7A1A28">$item-&gt;category_alias</span><span style="color:#303030"> : </span><span style="color:#7A1A28">$item-&gt;catid</span><span style="color:#303030">;</span>

            <span style="color:#303030">if</span><span style="color:#303030"> </span><span style="color:#2A2A3A">(</span><span style="color:#7A1A28">$access</span><span style="color:#303030"> || </span><span style="color:#1020E0">in_array</span><span style="color:#2A2A3A">(</span><span style="color:#7A1A28">$item-&gt;access</span><span style="color:#303030">, </span><span style="color:#7A1A28">$authorised</span><span style="color:#2A2A3A">))</span><span style="color:#303030"> </span><span style="color:#2A2A3A">{</span>
                <i style="color:#FF8A3D">// We know that user has the privilege to view the article</i>
                <span style="color:#7A1A28">$item-&gt;link</span><span style="color:#303030"> = </span><span style="color:#303030">JRoute::_</span><span style="color:#2A2A3A">(</span><span style="color:#303030">ContentHelperRoute::getArticleRoute</span><span style="color:#2A2A3A">(</span><span style="color:#7A1A28">$item-&gt;slug</span><span style="color:#303030">, </span><span style="color:#7A1A28">$item-&gt;catslug</span><span style="color:#2A2A3A">))</span><span style="color:#303030">;</span>
            <span style="color:#2A2A3A">}</span>
             <b style="color:#111">else</b><span style="color:#303030"> </span><span style="color:#2A2A3A">{</span>
                <i style="color:#FF8A3D">// Angie Fixed Routing</i>
                <span style="color:#7A1A28">$app</span><span style="color:#303030">    = </span><span style="color:#303030">JFactory::getApplication</span><span style="color:#2A2A3A">()</span><span style="color:#303030">;</span></div>
<div class="m" style="left:176px;top:155px;width:40px;height:266px;overflow:hidden;color:#282828;font-size:12.6px">188
189
190
191
192
193
194
195
196
197
198
199
200
201
202
203</div>
<div style="left:199.5px;top:159.5px;width:4px;height:4px;background:#0010E0;border-radius:50%"></div>
<div style="left:199.5px;top:227.5px;width:4px;height:4px;background:#0010E0;border-radius:50%"></div>
<div style="left:199.5px;top:261.5px;width:4px;height:4px;background:#0010E0;border-radius:50%"></div>
<div style="left:199.5px;top:278.5px;width:4px;height:4px;background:#0010E0;border-radius:50%"></div>
<div style="left:199.5px;top:312.5px;width:4px;height:4px;background:#0010E0;border-radius:50%"></div>
<div style="left:199.5px;top:346.5px;width:4px;height:4px;background:#0010E0;border-radius:50%"></div>
<div style="left:199.5px;top:414.5px;width:4px;height:4px;background:#0010E0;border-radius:50%"></div>
<div style="left:190.5px;top:259.5px;width:8px;height:8px;background:radial-gradient(circle at 35% 35%,#FF8080,#E81010 60%,#B00000);border-radius:50%"></div>
<svg style="left:188px;top:276px" width="12" height="10" viewBox="0 0 12 10"><path d="M0.5 2.5 H6 V0 L11.5 4.5 L6 9 V6.5 H0.5 Z" fill="#4A9AF0" stroke="#2A6AC0" stroke-width="0.8"/></svg>
<svg style="left:213px;top:242px" width="9" height="9" viewBox="0 0 9 9"><rect x="0.5" y="0.5" width="8" height="8" fill="#fff" stroke="#7A8AA8"/><path d="M2 4.5 H7" stroke="#4A5A78"/></svg>
<svg style="left:213px;top:310px" width="9" height="9" viewBox="0 0 9 9"><rect x="0.5" y="0.5" width="8" height="8" fill="#fff" stroke="#7A8AA8"/><path d="M2 4.5 H7" stroke="#4A5A78"/></svg>
<svg style="left:213px;top:378px" width="9" height="9" viewBox="0 0 9 9"><rect x="0.5" y="0.5" width="8" height="8" fill="#fff" stroke="#7A8AA8"/><path d="M2 4.5 H7" stroke="#4A5A78"/></svg>
<div style="left:874px;top:152px;width:17px;height:269px;background:linear-gradient(90deg,#F3F1EC,#FEFEFB 60%,#F3F1EC)"></div>
<div style="left:875px;top:154px;width:15px;height:15px;background:linear-gradient(135deg,#E3ECFD,#C3D5FC 60%,#B7CBF8);border:1px solid #B3C8F5;border-radius:2px;box-shadow:inset -1px -1px 0 #9FB5E8"></div>
<svg style="left:0;top:0" width="939" height="681"><path d="M879.0 163.0 L882.5 159.5 L886.0 163.0" fill="none" stroke="#4D6185" stroke-width="2"/></svg>
<div style="left:875px;top:284px;width:15px;height:8px;background:linear-gradient(135deg,#DCE6FD,#C6D6FC 60%,#BACDF8);border:1px solid #B3C8F5;border-radius:2px;box-shadow:inset -1px -1px 0 #A8BDEA"></div>
<div style="left:875px;top:403px;width:15px;height:15px;background:linear-gradient(135deg,#E3ECFD,#C3D5FC 60%,#B7CBF8);border:1px solid #B3C8F5;border-radius:2px;box-shadow:inset -1px -1px 0 #9FB5E8"></div>
<svg style="left:0;top:0" width="939" height="681"><path d="M879.0 409.0 L882.5 412.5 L886.0 409.0" fill="none" stroke="#4D6185" stroke-width="2"/></svg>
<div style="left:891px;top:152px;width:11px;height:285px;background:#EEEEF2"></div>
<div style="left:891px;top:152px;width:1px;height:285px;background:#DADAE2"></div>
<div style="left:901px;top:152px;width:1px;height:285px;background:#C6C8D6"></div>
<svg style="left:894px;top:161px" width="6" height="3"><path d="M0 0 H5 L2.5 3 Z" fill="#111"/></svg>
<div style="left:892px;top:290px;width:10px;height:12px;background:#D4DEF6;border:1px solid #A6B8E0"></div>
<div style="left:171px;top:421px;width:703px;height:16px;background:linear-gradient(#F3F1EC,#FEFEFB 60%,#F3F1EC)"></div>
<div style="left:172px;top:421px;width:14px;height:16px;background:linear-gradient(135deg,#E3ECFD,#C3D5FC 60%,#B7CBF8);border:1px solid #B3C8F5;border-radius:2px;box-shadow:inset -1px -1px 0 #9FB5E8"></div>
<svg style="left:0;top:0" width="939" height="681"><path d="M180.5 425.5 L177.0 429.0 L180.5 432.5" fill="none" stroke="#4D6185" stroke-width="2"/></svg>
<div style="left:189px;top:421px;width:24px;height:16px;background:linear-gradient(135deg,#DCE6FD,#C6D6FC 60%,#BACDF8);border:1px solid #B3C8F5;border-radius:2px;box-shadow:inset -1px -1px 0 #A8BDEA"></div>
<svg style="left:197px;top:426px" width="9" height="7"><path d="M0.5 0 V7 M2.5 0 V7 M4.5 0 V7 M6.5 0 V7" stroke="#EEF3FE"/><path d="M1.5 0 V7 M3.5 0 V7 M5.5 0 V7 M7.5 0 V7" stroke="#8CA7E0"/></svg>
<div style="left:858px;top:421px;width:15px;height:16px;background:linear-gradient(135deg,#E3ECFD,#C3D5FC 60%,#B7CBF8);border:1px solid #B3C8F5;border-radius:2px;box-shadow:inset -1px -1px 0 #9FB5E8"></div>
<svg style="left:0;top:0" width="939" height="681"><path d="M864.0 425.5 L867.5 429.0 L864.0 432.5" fill="none" stroke="#4D6185" stroke-width="2"/></svg>
<div style="left:874px;top:421px;width:17px;height:16px;background:#EBEADB"></div>
<div style="left:148px;top:438px;width:42px;height:23px;background:#CCCEDB"></div>
<div class="t" style="left:152px;top:443px;font-weight:bold;color:#6D6D6D">Editor</div>
<div class="t" style="left:194px;top:443px;color:#1E1E1E;transform-origin:0 0;transform:scaleX(0.9784)">Preview</div>
<svg style="left:878px;top:446px" width="6" height="9" viewBox="0 0 6 9"><path d="M5 0.5 L0.5 4.5 L5 8.5 Z" fill="none" stroke="#666"/></svg>
<svg style="left:892px;top:446px" width="6" height="9" viewBox="0 0 6 9"><path d="M0.5 0.5 L5 4.5 L0.5 8.5 Z" fill="none" stroke="#666"/></svg>
<div style="left:35px;top:465px;width:868px;height:6px;background:#CCCEDB"></div>
<div class="t" style="left:39px;top:475px;color:#1E1E1E;transform-origin:0 0;transform:scaleX(0.9347)">Locals</div>
<svg style="left:77px;top:479px" width="490" height="5"><defs><pattern id="dg77" width="4" height="4" patternUnits="userSpaceOnUse"><rect x="0" y="0" width="1" height="1" fill="#9C9CA6"/><rect x="2" y="2" width="1" height="1" fill="#9C9CA6"/></pattern></defs><rect width="490" height="5" fill="url(#dg77)"/></svg>
<svg style="left:575px;top:480px" width="8" height="4"><path d="M0 0 H7 L3.5 4 Z" fill="#1E1E1E"/></svg>
<svg style="left:591px;top:475px" width="8" height="11" viewBox="0 0 8 11"><path d="M1 0.5 H7 M0.5 6.5 H7.5 M4 6.5 V11" stroke="#1E1E1E" fill="none"/><rect x="2.5" y="1.5" width="3" height="5" fill="none" stroke="#1E1E1E"/><rect x="4" y="1" width="2" height="5.5" fill="#1E1E1E"/></svg>
<svg style="left:608px;top:476px" width="10" height="9" viewBox="0 0 10 9"><path d="M1 1 L9 8 M9 1 L1 8" stroke="#1E1E1E" stroke-width="1.6"/></svg>
<div style="left:35px;top:492px;width:589px;height:20px;background:#fff;border:1px solid #7F9DB9"></div>
<div class="t" style="left:38px;top:495px;color:#1E1E1E">modArticlesCategoryHelper::getList()</div>
<div style="left:607px;top:495px;width:16px;height:16px;background:linear-gradient(135deg,#E3ECFD,#C3D5FC 60%,#B7CBF8);border:1px solid #B3C8F5;border-radius:2px"></div>
<svg style="left:611px;top:500px" width="8" height="6" viewBox="0 0 8 6"><path d="M0.5 0.5 L4 4 L7.5 0.5" fill="none" stroke="#4D6185" stroke-width="2"/></svg>
<div style="left:35px;top:514px;width:589px;height:101px;background:#fff"></div>
<div style="left:35px;top:514px;width:589px;height:17px;background:linear-gradient(#EBEADB,#EBEADB 13px,#D8D6C6 15px,#CBC7B8 17px)"></div>
<div style="left:356px;top:516px;width:1px;height:12px;background:#D0CCBA"></div>
<div class="t" style="left:42px;top:516px;color:#000">Name</div>
<div class="t" style="left:364px;top:516px;color:#000">Value</div>
<div style="left:35px;top:531px;width:572px;height:84px;overflow:hidden">
<div style="left:1px;top:-9px;width:571px;height:1px;background-image:linear-gradient(90deg,#D6D3BE 50%,transparent 50%);background-size:2px 1px"></div>
<div style="left:1px;top:-9px;width:1px;height:18px;background-image:linear-gradient(#D6D3BE 50%,transparent 50%);background-size:1px 2px"></div>
<div style="left:321px;top:-9px;width:1px;height:18px;background-image:linear-gradient(#D6D3BE 50%,transparent 50%);background-size:1px 2px"></div>
<div class="t" style="left:23px;top:-6px;color:#1E1E1E">$show_date_field</div>
<div class="t" style="left:327px;top:-6px;color:#1E1E1E">created</div>
<div style="left:1px;top:9px;width:571px;height:1px;background-image:linear-gradient(90deg,#D6D3BE 50%,transparent 50%);background-size:2px 1px"></div>
<div style="left:1px;top:9px;width:1px;height:18px;background-image:linear-gradient(#D6D3BE 50%,transparent 50%);background-size:1px 2px"></div>
<div style="left:321px;top:9px;width:1px;height:18px;background-image:linear-gradient(#D6D3BE 50%,transparent 50%);background-size:1px 2px"></div>
<div class="t" style="left:23px;top:12px;color:#1E1E1E">$show_date</div>
<div class="t" style="left:327px;top:12px;color:#1E1E1E">0</div>
<div style="left:1px;top:27px;width:571px;height:1px;background-image:linear-gradient(90deg,#D6D3BE 50%,transparent 50%);background-size:2px 1px"></div>
<div style="left:1px;top:27px;width:1px;height:18px;background-image:linear-gradient(#D6D3BE 50%,transparent 50%);background-size:1px 2px"></div>
<div style="left:321px;top:27px;width:1px;height:18px;background-image:linear-gradient(#D6D3BE 50%,transparent 50%);background-size:1px 2px"></div>
<div class="t" style="left:23px;top:30px;color:#C00000">$items</div>
<div style="left:19px;top:45px;width:553px;height:1px;background-image:linear-gradient(90deg,#D6D3BE 50%,transparent 50%);background-size:2px 1px"></div>
<div style="left:1px;top:45px;width:1px;height:18px;background-image:linear-gradient(#D6D3BE 50%,transparent 50%);background-size:1px 2px"></div>
<div style="left:19px;top:45px;width:1px;height:18px;background-image:linear-gradient(#D6D3BE 50%,transparent 50%);background-size:1px 2px"></div>
<div style="left:321px;top:45px;width:1px;height:18px;background-image:linear-gradient(#D6D3BE 50%,transparent 50%);background-size:1px 2px"></div>
<div class="t" style="left:41px;top:48px;color:#C00000">0</div>
<div style="left:1px;top:64px;width:320px;height:17px;background:#EBE9DA"></div>
<div style="left:38px;top:63px;width:534px;height:1px;background-image:linear-gradient(90deg,#D6D3BE 50%,transparent 50%);background-size:2px 1px"></div>
<div style="left:1px;top:63px;width:1px;height:18px;background-image:linear-gradient(#D6D3BE 50%,transparent 50%);background-size:1px 2px"></div>
<div style="left:19px;top:63px;width:1px;height:18px;background-image:linear-gradient(#D6D3BE 50%,transparent 50%);background-size:1px 2px"></div>
<div style="left:38px;top:63px;width:1px;height:18px;background-image:linear-gradient(#D6D3BE 50%,transparent 50%);background-size:1px 2px"></div>
<div style="left:321px;top:63px;width:1px;height:18px;background-image:linear-gradient(#D6D3BE 50%,transparent 50%);background-size:1px 2px"></div>
<div class="t" style="left:59px;top:66px;color:#1E1E1E">id</div>
<div class="t" style="left:327px;top:66px;color:#1E1E1E">24</div>
<div style="left:0;top:81px;width:572px;height:1px;background-image:linear-gradient(90deg,#D6D3BE 50%,transparent 50%);background-size:2px 1px"></div>
</div>
<svg style="left:41px;top:563px" width="9" height="9" viewBox="0 0 9 9"><rect x="0.5" y="0.5" width="8" height="8" fill="url(#pmg2)" stroke="#7B98B5"/><defs><linearGradient id="pmg2" x1="0" y1="0" x2="1" y2="1"><stop offset="0" stop-color="#fff"/><stop offset="1" stop-color="#C8C4B8"/></linearGradient></defs><path d="M2 4.5 H7" stroke="#000"/></svg>
<svg style="left:59px;top:581px" width="9" height="9" viewBox="0 0 9 9"><rect x="0.5" y="0.5" width="8" height="8" fill="url(#pmg2)" stroke="#7B98B5"/><defs><linearGradient id="pmg2" x1="0" y1="0" x2="1" y2="1"><stop offset="0" stop-color="#fff"/><stop offset="1" stop-color="#C8C4B8"/></linearGradient></defs><path d="M2 4.5 H7" stroke="#000"/></svg>
<div style="left:607px;top:531px;width:17px;height:84px;background:linear-gradient(90deg,#F3F1EC,#FEFEFB 60%,#F3F1EC)"></div>
<div style="left:608px;top:532px;width:15px;height:16px;background:linear-gradient(135deg,#E3ECFD,#C3D5FC 60%,#B7CBF8);border:1px solid #B3C8F5;border-radius:2px;box-shadow:inset -1px -1px 0 #9FB5E8"></div>
<svg style="left:0;top:0" width="939" height="681"><path d="M612.0 541.5 L615.5 538.0 L619.0 541.5" fill="none" stroke="#4D6185" stroke-width="2"/></svg>
<div style="left:608px;top:552px;width:15px;height:7px;background:linear-gradient(135deg,#DCE6FD,#C6D6FC 60%,#BACDF8);border:1px solid #B3C8F5;border-radius:2px;box-shadow:inset -1px -1px 0 #A8BDEA"></div>
<div style="left:608px;top:597px;width:15px;height:16px;background:linear-gradient(135deg,#E3ECFD,#C3D5FC 60%,#B7CBF8);border:1px solid #B3C8F5;border-radius:2px;box-shadow:inset -1px -1px 0 #9FB5E8"></div>
<svg style="left:0;top:0" width="939" height="681"><path d="M612.0 603.5 L615.5 607.0 L619.0 603.5" fill="none" stroke="#4D6185" stroke-width="2"/></svg>
<div style="left:35px;top:615px;width:572px;height:15px;background:linear-gradient(#F3F1EC,#FEFEFB 60%,#F3F1EC)"></div>
<div style="left:37px;top:615px;width:14px;height:15px;background:linear-gradient(135deg,#E3ECFD,#C3D5FC 60%,#B7CBF8);border:1px solid #B3C8F5;border-radius:2px;box-shadow:inset -1px -1px 0 #9FB5E8"></div>
<svg style="left:0;top:0" width="939" height="681"><path d="M45.5 619.0 L42.0 622.5 L45.5 626.0" fill="none" stroke="#4D6185" stroke-width="2"/></svg>
<div style="left:54px;top:615px;width:316px;height:15px;background:linear-gradient(135deg,#DCE6FD,#C6D6FC 60%,#BACDF8);border:1px solid #B3C8F5;border-radius:2px;box-shadow:inset -1px -1px 0 #A8BDEA"></div>
<svg style="left:207px;top:619px" width="9" height="7"><path d="M0.5 0 V7 M2.5 0 V7 M4.5 0 V7 M6.5 0 V7" stroke="#EEF3FE"/><path d="M1.5 0 V7 M3.5 0 V7 M5.5 0 V7 M7.5 0 V7" stroke="#8CA7E0"/></svg>
<div style="left:590px;top:615px;width:14px;height:15px;background:linear-gradient(135deg,#E3ECFD,#C3D5FC 60%,#B7CBF8);border:1px solid #B3C8F5;border-radius:2px;box-shadow:inset -1px -1px 0 #9FB5E8"></div>
<svg style="left:0;top:0" width="939" height="681"><path d="M595.5 619.0 L599.0 622.5 L595.5 626.0" fill="none" stroke="#4D6185" stroke-width="2"/></svg>
<div style="left:607px;top:615px;width:17px;height:15px;background:#EBEADB"></div>
<div class="t" style="left:40px;top:634px;color:#0E70C0;transform-origin:0 0;transform:scaleX(0.9347)">Locals</div>
<div class="t" style="left:82px;top:634px;color:#1E1E1E;transform-origin:0 0;transform:scaleX(0.9198)">Globals</div>
<div class="t" style="left:128px;top:634px;color:#1E1E1E;transform-origin:0 0;transform:scaleX(1.0376)">Watch</div>
<div class="t" style="left:171px;top:634px;color:#1E1E1E;transform-origin:0 0;transform:scaleX(0.9806)">Immediate</div>
<div class="t" style="left:233px;top:634px;color:#1E1E1E;transform-origin:0 0;transform:scaleX(0.9499)">Call Stack</div>
<div class="t" style="left:290px;top:634px;color:#1E1E1E;transform-origin:0 0;transform:scaleX(0.9751)">Breakpoints</div>
<div style="left:75px;top:631px;width:1px;height:19px;background:#D4D4DC"></div>
<div style="left:121px;top:631px;width:1px;height:19px;background:#D4D4DC"></div>
<div style="left:164px;top:631px;width:1px;height:19px;background:#D4D4DC"></div>
<div style="left:226px;top:631px;width:1px;height:19px;background:#D4D4DC"></div>
<div style="left:284px;top:631px;width:1px;height:19px;background:#D4D4DC"></div>
<div style="left:626px;top:471px;width:2px;height:179px;background:#E4E4EA"></div>
<div class="t" style="left:634px;top:475px;color:#1E1E1E;transform-origin:0 0;transform:scaleX(0.9727)">Log</div>
<svg style="left:659px;top:479px" width="189" height="5"><defs><pattern id="dg659" width="4" height="4" patternUnits="userSpaceOnUse"><rect x="0" y="0" width="1" height="1" fill="#9C9CA6"/><rect x="2" y="2" width="1" height="1" fill="#9C9CA6"/></pattern></defs><rect width="189" height="5" fill="url(#dg659)"/></svg>
<svg style="left:856px;top:480px" width="8" height="4"><path d="M0 0 H7 L3.5 4 Z" fill="#1E1E1E"/></svg>
<svg style="left:872px;top:475px" width="8" height="11" viewBox="0 0 8 11"><path d="M1 0.5 H7 M0.5 6.5 H7.5 M4 6.5 V11" stroke="#1E1E1E" fill="none"/><rect x="2.5" y="1.5" width="3" height="5" fill="none" stroke="#1E1E1E"/><rect x="4" y="1" width="2" height="5.5" fill="#1E1E1E"/></svg>
<svg style="left:888px;top:476px" width="10" height="9" viewBox="0 0 10 9"><path d="M1 1 L9 8 M9 1 L1 8" stroke="#1E1E1E" stroke-width="1.6"/></svg>
<div style="left:630px;top:493px;width:273px;height:138px;background:#fff"></div>
<div style="left:630px;top:493px;width:273px;height:17px;background:linear-gradient(#EBEADB,#EBEADB 13px,#D8D6C6 15px,#CBC7B8 17px)"></div>
<div class="t" style="left:637px;top:495px;color:#000">Type</div>
<div class="t" style="left:702px;top:495px;color:#000">Time</div>
<div style="left:685px;top:496px;width:1px;height:12px;background:#D0CCBA"></div>
<div style="left:695px;top:496px;width:1px;height:12px;background:#D0CCBA"></div>
<div style="left:753px;top:496px;width:1px;height:12px;background:#D0CCBA"></div>
<div style="left:763px;top:496px;width:1px;height:12px;background:#D0CCBA"></div>
<div style="left:630px;top:510px;width:257px;height:121px;overflow:hidden">
<div style="left:0;top:11px;width:134px;height:1px;background-image:linear-gradient(90deg,#DCDCCC 50%,transparent 50%);background-size:2px 1px"></div>
<div style="left:55px;top:-6px;width:1px;height:18px;background-image:linear-gradient(#DCDCCC 50%,transparent 50%);background-size:1px 2px"></div>
<div style="left:65px;top:-6px;width:1px;height:18px;background-image:linear-gradient(#DCDCCC 50%,transparent 50%);background-size:1px 2px"></div>
<div style="left:123px;top:-6px;width:1px;height:18px;background-image:linear-gradient(#DCDCCC 50%,transparent 50%);background-size:1px 2px"></div>
<div style="left:133px;top:-6px;width:1px;height:18px;background-image:linear-gradient(#DCDCCC 50%,transparent 50%);background-size:1px 2px"></div>
<div class="t" style="left:8px;top:-4px;color:#1E1E1E">Debu<span style="letter-spacing:1.2px">...</span></div>
<div class="t" style="left:74px;top:-4px;color:#1E1E1E">10:32:<span style="letter-spacing:1.2px">...</span></div>
<div style="left:0;top:29px;width:134px;height:1px;background-image:linear-gradient(90deg,#DCDCCC 50%,transparent 50%);background-size:2px 1px"></div>
<div style="left:55px;top:12px;width:1px;height:18px;background-image:linear-gradient(#DCDCCC 50%,transparent 50%);background-size:1px 2px"></div>
<div style="left:65px;top:12px;width:1px;height:18px;background-image:linear-gradient(#DCDCCC 50%,transparent 50%);background-size:1px 2px"></div>
<div style="left:123px;top:12px;width:1px;height:18px;background-image:linear-gradient(#DCDCCC 50%,transparent 50%);background-size:1px 2px"></div>
<div style="left:133px;top:12px;width:1px;height:18px;background-image:linear-gradient(#DCDCCC 50%,transparent 50%);background-size:1px 2px"></div>
<div class="t" style="left:8px;top:14px;color:#1E1E1E">Debu<span style="letter-spacing:1.2px">...</span></div>
<div class="t" style="left:74px;top:14px;color:#1E1E1E">10:32:<span style="letter-spacing:1.2px">...</span></div>
<div style="left:0;top:47px;width:134px;height:1px;background-image:linear-gradient(90deg,#DCDCCC 50%,transparent 50%);background-size:2px 1px"></div>
<div style="left:55px;top:30px;width:1px;height:18px;background-image:linear-gradient(#DCDCCC 50%,transparent 50%);background-size:1px 2px"></div>
<div style="left:65px;top:30px;width:1px;height:18px;background-image:linear-gradient(#DCDCCC 50%,transparent 50%);background-size:1px 2px"></div>
<div style="left:123px;top:30px;width:1px;height:18px;background-image:linear-gradient(#DCDCCC 50%,transparent 50%);background-size:1px 2px"></div>
<div style="left:133px;top:30px;width:1px;height:18px;background-image:linear-gradient(#DCDCCC 50%,transparent 50%);background-size:1px 2px"></div>
<div class="t" style="left:8px;top:32px;color:#1E1E1E">Debu<span style="letter-spacing:1.2px">...</span></div>
<div class="t" style="left:74px;top:32px;color:#1E1E1E">10:34:<span style="letter-spacing:1.2px">...</span></div>
<div style="left:0;top:65px;width:134px;height:1px;background-image:linear-gradient(90deg,#DCDCCC 50%,transparent 50%);background-size:2px 1px"></div>
<div style="left:55px;top:48px;width:1px;height:18px;background-image:linear-gradient(#DCDCCC 50%,transparent 50%);background-size:1px 2px"></div>
<div style="left:65px;top:48px;width:1px;height:18px;background-image:linear-gradient(#DCDCCC 50%,transparent 50%);background-size:1px 2px"></div>
<div style="left:123px;top:48px;width:1px;height:18px;background-image:linear-gradient(#DCDCCC 50%,transparent 50%);background-size:1px 2px"></div>
<div style="left:133px;top:48px;width:1px;height:18px;background-image:linear-gradient(#DCDCCC 50%,transparent 50%);background-size:1px 2px"></div>
<div class="t" style="left:8px;top:50px;color:#1E1E1E">IDE</div>
<div class="t" style="left:74px;top:50px;color:#1E1E1E">10:34:<span style="letter-spacing:1.2px">...</span></div>
<div style="left:0;top:66px;width:257px;height:18px;background:#EBEADB"></div>
<div style="left:0;top:83px;width:134px;height:1px;background-image:linear-gradient(90deg,#DCDCCC 50%,transparent 50%);background-size:2px 1px"></div>
<div style="left:55px;top:66px;width:1px;height:18px;background-image:linear-gradient(#DCDCCC 50%,transparent 50%);background-size:1px 2px"></div>
<div style="left:65px;top:66px;width:1px;height:18px;background-image:linear-gradient(#DCDCCC 50%,transparent 50%);background-size:1px 2px"></div>
<div style="left:123px;top:66px;width:1px;height:18px;background-image:linear-gradient(#DCDCCC 50%,transparent 50%);background-size:1px 2px"></div>
<div style="left:133px;top:66px;width:1px;height:18px;background-image:linear-gradient(#DCDCCC 50%,transparent 50%);background-size:1px 2px"></div>
<div class="t" style="left:8px;top:68px;color:#1E1E1E">IDE</div>
<div class="t" style="left:74px;top:68px;color:#1E1E1E">10:34:<span style="letter-spacing:1.2px">...</span></div>
<div style="left:0;top:101px;width:134px;height:1px;background-image:linear-gradient(90deg,#DCDCCC 50%,transparent 50%);background-size:2px 1px"></div>
<div style="left:55px;top:84px;width:1px;height:18px;background-image:linear-gradient(#DCDCCC 50%,transparent 50%);background-size:1px 2px"></div>
<div style="left:65px;top:84px;width:1px;height:18px;background-image:linear-gradient(#DCDCCC 50%,transparent 50%);background-size:1px 2px"></div>
<div style="left:123px;top:84px;width:1px;height:18px;background-image:linear-gradient(#DCDCCC 50%,transparent 50%);background-size:1px 2px"></div>
<div style="left:133px;top:84px;width:1px;height:18px;background-image:linear-gradient(#DCDCCC 50%,transparent 50%);background-size:1px 2px"></div>
<div class="t" style="left:8px;top:86px;color:#1E1E1E">IDE</div>
<div class="t" style="left:74px;top:86px;color:#1E1E1E">10:37:<span style="letter-spacing:1.2px">...</span></div>
<div style="left:0;top:119px;width:134px;height:1px;background-image:linear-gradient(90deg,#DCDCCC 50%,transparent 50%);background-size:2px 1px"></div>
<div style="left:55px;top:102px;width:1px;height:18px;background-image:linear-gradient(#DCDCCC 50%,transparent 50%);background-size:1px 2px"></div>
<div style="left:65px;top:102px;width:1px;height:18px;background-image:linear-gradient(#DCDCCC 50%,transparent 50%);background-size:1px 2px"></div>
<div style="left:123px;top:102px;width:1px;height:18px;background-image:linear-gradient(#DCDCCC 50%,transparent 50%);background-size:1px 2px"></div>
<div style="left:133px;top:102px;width:1px;height:18px;background-image:linear-gradient(#DCDCCC 50%,transparent 50%);background-size:1px 2px"></div>
<div class="t" style="left:8px;top:104px;color:#1E1E1E">Debu<span style="letter-spacing:1.2px">...</span></div>
<div class="t" style="left:74px;top:104px;color:#1E1E1E">10:37:<span style="letter-spacing:1.2px">...</span></div>
</div>
<div style="left:887px;top:510px;width:16px;height:121px;background:linear-gradient(90deg,#F3F1EC,#FEFEFB 60%,#F3F1EC)"></div>
<div style="left:888px;top:512px;width:14px;height:15px;background:linear-gradient(135deg,#E3ECFD,#C3D5FC 60%,#B7CBF8);border:1px solid #B3C8F5;border-radius:2px;box-shadow:inset -1px -1px 0 #9FB5E8"></div>
<svg style="left:0;top:0" width="939" height="681"><path d="M891.5 521.0 L895.0 517.5 L898.5 521.0" fill="none" stroke="#4D6185" stroke-width="2"/></svg>
<div style="left:888px;top:606px;width:14px;height:6px;background:linear-gradient(135deg,#DCE6FD,#C6D6FC 60%,#BACDF8);border:1px solid #B3C8F5;border-radius:2px;box-shadow:inset -1px -1px 0 #A8BDEA"></div>
<div style="left:888px;top:615px;width:14px;height:15px;background:linear-gradient(135deg,#E3ECFD,#C3D5FC 60%,#B7CBF8);border:1px solid #B3C8F5;border-radius:2px;box-shadow:inset -1px -1px 0 #9FB5E8"></div>
<svg style="left:0;top:0" width="939" height="681"><path d="M891.5 621.0 L895.0 624.5 L898.5 621.0" fill="none" stroke="#4D6185" stroke-width="2"/></svg>
<div class="t" style="left:635px;top:634px;color:#1E1E1E;transform-origin:0 0;transform:scaleX(1.0091)">Errors</div>
<div class="t" style="left:677px;top:634px;color:#1E1E1E;transform-origin:0 0;transform:scaleX(1.0292)">Output</div>
<div class="t" style="left:722px;top:634px;color:#0E70C0;transform-origin:0 0;transform:scaleX(0.9727)">Log</div>
<div class="t" style="left:752px;top:634px;color:#1E1E1E;transform-origin:0 0;transform:scaleX(0.9412)">Debug Sessions</div>
<div class="t" style="left:839px;top:634px;color:#1E1E1E;transform-origin:0 0;transform:scaleX(1.0031)">Transfers</div>
<div style="left:670px;top:631px;width:1px;height:19px;background:#D4D4DC"></div>
<div style="left:716px;top:631px;width:1px;height:19px;background:#D4D4DC"></div>
<div style="left:746px;top:631px;width:1px;height:19px;background:#D4D4DC"></div>
<div style="left:832px;top:631px;width:1px;height:19px;background:#D4D4DC"></div>
<div style="left:929px;top:127px;width:6px;height:99px;background:#CCCEDB"></div>
<div style="left:929px;top:238px;width:6px;height:91px;background:#CCCEDB"></div>
<div style="left:929px;top:341px;width:6px;height:70px;background:#CCCEDB"></div>
<div style="left:929px;top:423px;width:6px;height:44px;background:#CCCEDB"></div>
<div style="left:929px;top:481px;width:6px;height:67px;background:#CCCEDB"></div>
<div style="left:929px;top:561px;width:6px;height:67px;background:#CCCEDB"></div>
<div style="left:929px;top:640px;width:6px;height:11px;background:#CCCEDB"></div>
<svg style="left:910px;top:128px" width="16" height="15" viewBox="0 0 16 15"><rect x="1.5" y="0" width="2" height="2" fill="#139A2A"/><rect x="0.5" y="3.5" width="3" height="1.5" fill="#139A2A"/><rect x="1.5" y="3.5" width="2" height="9.5" fill="#139A2A"/><rect x="0" y="12" width="5" height="1.8" fill="#139A2A"/><rect x="5.5" y="4.5" width="5" height="5" fill="#FFF2A0" stroke="#B8983A"/><path d="M8 6 V8 M7 7 H9" stroke="#B8983A" stroke-width="0.8"/><path d="M10.5 7 H12 M8 4.5 V2 H12 M8 9.5 V12 H12" fill="none" stroke="#B8983A"/><rect x="12.5" y="0.5" width="2.5" height="2.5" fill="#FFF2A0" stroke="#B8983A" stroke-width="0.8"/><rect x="12.5" y="5.5" width="2.5" height="2.5" fill="#FFF2A0" stroke="#B8983A" stroke-width="0.8"/><rect x="12.5" y="10.5" width="2.5" height="2.5" fill="#FFF2A0" stroke="#B8983A" stroke-width="0.8"/></svg>
<div class="t" style="left:912px;top:145px;transform-origin:0 0;transform:translate(12px,0) rotate(90deg) scaleX(0.9913);color:#222">Code Navigator</div>
<svg style="left:909px;top:238px" width="16" height="16" viewBox="0 0 16 16"><circle cx="8" cy="8" r="7.5" fill="#2E7FD8"/><circle cx="8" cy="8" r="6.2" fill="#5AA8F0" stroke="#fff" stroke-width="1.2"/><text x="8" y="12" font-size="10" font-weight="bold" text-anchor="middle" font-family="Liberation Sans" fill="#fff">S</text></svg>
<div class="t" style="left:912px;top:256px;transform-origin:0 0;transform:translate(12px,0) rotate(90deg) scaleX(0.9680);color:#222">NuSoap Client</div>
<svg style="left:909px;top:341px" width="16" height="16" viewBox="0 0 16 16"><circle cx="8" cy="8" r="7.5" fill="#8A3CB8"/><circle cx="8" cy="8" r="6.2" fill="#A864D0" stroke="#E8D0F0" stroke-width="1.2"/><text x="8" y="11.5" font-size="9" font-weight="bold" text-anchor="middle" font-family="Liberation Sans" fill="#fff">F</text></svg>
<div class="t" style="left:912px;top:360px;transform-origin:0 0;transform:translate(12px,0) rotate(90deg) scaleX(0.9682);color:#222">Functions</div>
<svg style="left:909px;top:423px" width="16" height="16" viewBox="0 0 16 16"><circle cx="8" cy="8" r="7.5" fill="#2A78D8"/><circle cx="8" cy="8" r="6.2" fill="#58A4F2" stroke="#fff" stroke-width="1.2"/><text x="8" y="12" font-size="10" font-weight="bold" text-anchor="middle" font-family="Liberation Sans" fill="#fff">?</text></svg>
<div class="t" style="left:912px;top:441px;transform-origin:0 0;transform:translate(12px,0) rotate(90deg) scaleX(1.0033);color:#222">Help</div>
<svg style="left:910px;top:481px" width="15" height="13" viewBox="0 0 15 13"><rect x="0.5" y="0.5" width="14" height="12" fill="#6AA0E0" stroke="#3A70B8"/><rect x="2" y="2" width="11" height="9" fill="#4A88D0"/><path d="M4.5 3.5 L9 6.5 L4.5 9.5" fill="none" stroke="#fff" stroke-width="1.4"/></svg>
<div class="t" style="left:912px;top:499px;transform-origin:0 0;transform:translate(12px,0) rotate(90deg) scaleX(1.0199);color:#222">Terminals</div>
<svg style="left:911px;top:561px" width="13" height="15" viewBox="0 0 13 15"><path d="M0.5 2.5 Q0.5 0.5 6.5 0.5 Q12.5 0.5 12.5 2.5 V12.5 Q12.5 14.5 6.5 14.5 Q0.5 14.5 0.5 12.5 Z" fill="#F8D040" stroke="#C8A020"/><path d="M0.5 2.5 Q0.5 4.5 6.5 4.5 Q12.5 4.5 12.5 2.5" fill="none" stroke="#C8A020"/></svg>
<div class="t" style="left:912px;top:579px;transform-origin:0 0;transform:translate(12px,0) rotate(90deg) scaleX(0.9813);color:#222">DB Client</div>
<svg style="left:910px;top:640px" width="15" height="11" viewBox="0 0 15 11"><rect x="0.5" y="0.5" width="14" height="10.5" rx="1" fill="#F8D860" stroke="#D0A828"/><path d="M3.5 6.5 L7.5 2.5 L11.5 6.5 Z" fill="none" stroke="#C08810"/><path d="M3 8.5 H12" stroke="#A06A10"/></svg>
<svg style="left:923px;top:664px" width="10" height="10" viewBox="0 0 10 10"><rect x="8" y="0" width="1.2" height="1.2" fill="#9CCCF0"/><rect x="6" y="2" width="1.2" height="1.2" fill="#9CCCF0"/><rect x="8" y="2" width="1.2" height="1.2" fill="#9CCCF0"/><rect x="4" y="4" width="1.2" height="1.2" fill="#9CCCF0"/><rect x="6" y="4" width="1.2" height="1.2" fill="#9CCCF0"/><rect x="8" y="4" width="1.2" height="1.2" fill="#9CCCF0"/><rect x="2" y="6" width="1.2" height="1.2" fill="#9CCCF0"/><rect x="4" y="6" width="1.2" height="1.2" fill="#9CCCF0"/><rect x="6" y="6" width="1.2" height="1.2" fill="#9CCCF0"/><rect x="8" y="6" width="1.2" height="1.2" fill="#9CCCF0"/><rect x="0" y="8" width="1.2" height="1.2" fill="#9CCCF0"/><rect x="2" y="8" width="1.2" height="1.2" fill="#9CCCF0"/><rect x="4" y="8" width="1.2" height="1.2" fill="#9CCCF0"/><rect x="6" y="8" width="1.2" height="1.2" fill="#9CCCF0"/><rect x="8" y="8" width="1.2" height="1.2" fill="#9CCCF0"/></svg>
</body></html>
